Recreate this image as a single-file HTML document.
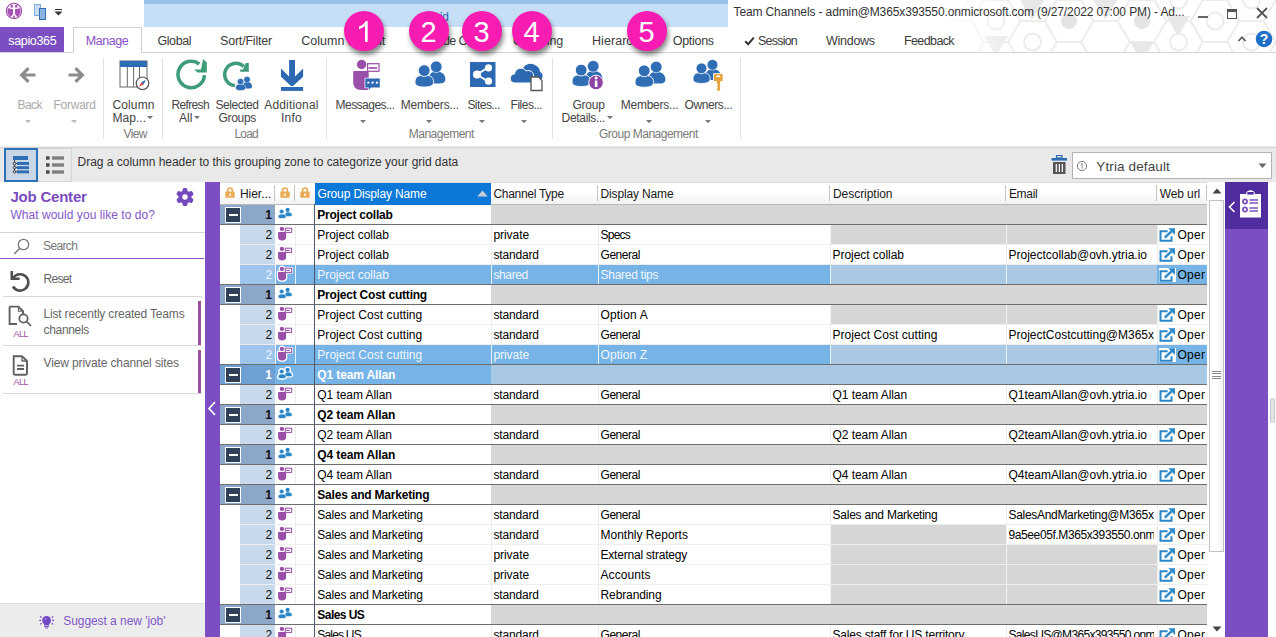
<!DOCTYPE html>
<html><head><meta charset="utf-8"><title>Team Channels</title>
<style>
html,body{margin:0;padding:0;}
body{width:1276px;height:637px;overflow:hidden;position:relative;background:#fff;font-family:"Liberation Sans", sans-serif;}
.t{position:absolute;white-space:pre;font-family:"Liberation Sans", sans-serif;}
div,svg{box-sizing:border-box;}
</style></head><body>
<svg style="position:absolute;left:900px;top:0px;" width="376" height="52" viewBox="0 0 376 52"><polygon points="-25.7,-21.0 -37.8,0.0 -62.1,0.0 -74.3,-21.0 -62.2,-42.0 -37.8,-42.0" fill="none" stroke="#ececec" stroke-width="1.6"/><polygon points="-25.7,21.0 -37.8,42.0 -62.1,42.0 -74.3,21.0 -62.2,-0.0 -37.8,-0.0" fill="none" stroke="#ececec" stroke-width="1.6"/><polygon points="-25.7,63.0 -37.8,84.0 -62.1,84.0 -74.3,63.0 -62.2,42.0 -37.8,42.0" fill="none" stroke="#ececec" stroke-width="1.6"/><polygon points="10.8,0.0 -1.3,21.0 -25.6,21.0 -37.8,0.0 -25.7,-21.0 -1.3,-21.0" fill="none" stroke="#ececec" stroke-width="1.6"/><polygon points="10.8,42.0 -1.3,63.0 -25.6,63.0 -37.8,42.0 -25.7,21.0 -1.3,21.0" fill="none" stroke="#ececec" stroke-width="1.6"/><polygon points="47.3,-21.0 35.2,0.0 10.9,0.0 -1.3,-21.0 10.8,-42.0 35.2,-42.0" fill="none" stroke="#ececec" stroke-width="1.6"/><polygon points="47.3,21.0 35.2,42.0 10.9,42.0 -1.3,21.0 10.8,-0.0 35.2,-0.0" fill="none" stroke="#ececec" stroke-width="1.6"/><polygon points="47.3,63.0 35.2,84.0 10.9,84.0 -1.3,63.0 10.8,42.0 35.2,42.0" fill="none" stroke="#ececec" stroke-width="1.6"/><polygon points="83.8,0.0 71.7,21.0 47.4,21.0 35.2,0.0 47.3,-21.0 71.7,-21.0" fill="none" stroke="#ececec" stroke-width="1.6"/><polygon points="83.8,42.0 71.7,63.0 47.4,63.0 35.2,42.0 47.3,21.0 71.7,21.0" fill="none" stroke="#ececec" stroke-width="1.6"/><polygon points="120.3,-21.0 108.2,0.0 83.9,0.0 71.7,-21.0 83.8,-42.0 108.2,-42.0" fill="none" stroke="#ececec" stroke-width="1.6"/><polygon points="120.3,21.0 108.2,42.0 83.9,42.0 71.7,21.0 83.8,-0.0 108.2,-0.0" fill="none" stroke="#ececec" stroke-width="1.6"/><polygon points="120.3,63.0 108.2,84.0 83.9,84.0 71.7,63.0 83.8,42.0 108.2,42.0" fill="none" stroke="#ececec" stroke-width="1.6"/><polygon points="156.8,0.0 144.7,21.0 120.4,21.0 108.2,0.0 120.3,-21.0 144.7,-21.0" fill="none" stroke="#ececec" stroke-width="1.6"/><polygon points="156.8,42.0 144.7,63.0 120.4,63.0 108.2,42.0 120.3,21.0 144.7,21.0" fill="none" stroke="#ececec" stroke-width="1.6"/><polygon points="193.3,-21.0 181.2,0.0 156.8,0.0 144.7,-21.0 156.8,-42.0 181.2,-42.0" fill="none" stroke="#ececec" stroke-width="1.6"/><polygon points="193.3,21.0 181.2,42.0 156.8,42.0 144.7,21.0 156.8,-0.0 181.2,-0.0" fill="none" stroke="#ececec" stroke-width="1.6"/><polygon points="193.3,63.0 181.2,84.0 156.8,84.0 144.7,63.0 156.8,42.0 181.2,42.0" fill="none" stroke="#ececec" stroke-width="1.6"/><polygon points="229.8,0.0 217.7,21.0 193.3,21.0 181.2,0.0 193.3,-21.0 217.7,-21.0" fill="none" stroke="#ececec" stroke-width="1.6"/><polygon points="229.8,42.0 217.7,63.0 193.3,63.0 181.2,42.0 193.3,21.0 217.7,21.0" fill="none" stroke="#ececec" stroke-width="1.6"/><polygon points="266.3,-21.0 254.2,0.0 229.8,0.0 217.7,-21.0 229.8,-42.0 254.2,-42.0" fill="none" stroke="#ececec" stroke-width="1.6"/><polygon points="266.3,21.0 254.2,42.0 229.8,42.0 217.7,21.0 229.8,-0.0 254.2,-0.0" fill="none" stroke="#ececec" stroke-width="1.6"/><polygon points="266.3,63.0 254.2,84.0 229.8,84.0 217.7,63.0 229.8,42.0 254.2,42.0" fill="none" stroke="#ececec" stroke-width="1.6"/><polygon points="302.8,0.0 290.6,21.0 266.4,21.0 254.2,0.0 266.3,-21.0 290.6,-21.0" fill="none" stroke="#ececec" stroke-width="1.6"/><polygon points="302.8,42.0 290.6,63.0 266.4,63.0 254.2,42.0 266.3,21.0 290.6,21.0" fill="none" stroke="#ececec" stroke-width="1.6"/><polygon points="339.3,-21.0 327.1,0.0 302.9,0.0 290.7,-21.0 302.8,-42.0 327.1,-42.0" fill="none" stroke="#ececec" stroke-width="1.6"/><polygon points="339.3,21.0 327.1,42.0 302.9,42.0 290.7,21.0 302.8,-0.0 327.1,-0.0" fill="none" stroke="#ececec" stroke-width="1.6"/><polygon points="339.3,63.0 327.1,84.0 302.9,84.0 290.7,63.0 302.8,42.0 327.1,42.0" fill="none" stroke="#ececec" stroke-width="1.6"/><polygon points="375.8,0.0 363.6,21.0 339.4,21.0 327.2,0.0 339.3,-21.0 363.6,-21.0" fill="none" stroke="#ececec" stroke-width="1.6"/><polygon points="375.8,42.0 363.6,63.0 339.4,63.0 327.2,42.0 339.3,21.0 363.6,21.0" fill="none" stroke="#ececec" stroke-width="1.6"/><polygon points="412.3,-21.0 400.1,0.0 375.9,0.0 363.7,-21.0 375.8,-42.0 400.1,-42.0" fill="none" stroke="#ececec" stroke-width="1.6"/><polygon points="412.3,21.0 400.1,42.0 375.9,42.0 363.7,21.0 375.8,-0.0 400.1,-0.0" fill="none" stroke="#ececec" stroke-width="1.6"/><polygon points="412.3,63.0 400.1,84.0 375.9,84.0 363.7,63.0 375.8,42.0 400.1,42.0" fill="none" stroke="#ececec" stroke-width="1.6"/><circle cx="-50" cy="21" r="8.5" fill="#fff" stroke="#ebebeb" stroke-width="1.8"/><circle cx="-13.5" cy="0" r="8.5" fill="#fff" stroke="#ebebeb" stroke-width="1.8"/><circle cx="23" cy="21" r="8.5" fill="#fff" stroke="#ebebeb" stroke-width="1.8"/><circle cx="59.5" cy="0" r="8.5" fill="#fff" stroke="#ebebeb" stroke-width="1.8"/><circle cx="96" cy="21" r="8.5" fill="#fff" stroke="#ebebeb" stroke-width="1.8"/><circle cx="132.5" cy="0" r="8.5" fill="#fff" stroke="#ebebeb" stroke-width="1.8"/><circle cx="132.5" cy="42" r="8.5" fill="#fff" stroke="#ebebeb" stroke-width="1.8"/><circle cx="169" cy="21" r="10.5" fill="#fff"/><circle cx="169" cy="21" r="8" fill="#e4e4e4"/><circle cx="205.5" cy="0" r="8.5" fill="#fff" stroke="#ebebeb" stroke-width="1.8"/><circle cx="242" cy="21" r="10.5" fill="#fff"/><circle cx="242" cy="21" r="8" fill="#e4e4e4"/><circle cx="278.5" cy="0" r="8.5" fill="#fff" stroke="#ebebeb" stroke-width="1.8"/><circle cx="278.5" cy="42" r="8.5" fill="#fff" stroke="#ebebeb" stroke-width="1.8"/><circle cx="315" cy="21" r="8.5" fill="#fff" stroke="#ebebeb" stroke-width="1.8"/><circle cx="351.5" cy="0" r="8.5" fill="#fff" stroke="#ebebeb" stroke-width="1.8"/><circle cx="351.5" cy="42" r="8.5" fill="#fff" stroke="#ebebeb" stroke-width="1.8"/><circle cx="388" cy="21" r="8.5" fill="#fff" stroke="#ebebeb" stroke-width="1.8"/><polygon points="193.5,0 217.5,0 205.5,20" fill="#e8e8e8"/><polygon points="266,16 290,16 278,36" fill="#e8e8e8"/><polygon points="230,42 254,42 242,62" fill="#e8e8e8"/><polygon points="120,0 144,0 132,20" fill="#e8e8e8"/><polygon points="84,36 108,36 96,56" fill="#e8e8e8"/></svg>
<div style="position:absolute;left:900px;top:0;width:120px;height:52px;background:linear-gradient(90deg,#fff 35%,rgba(255,255,255,0));"></div>
<div style="position:absolute;left:144px;top:0px;width:584px;height:27px;background:#C6DFF6;"></div>
<div style="position:absolute;left:144px;top:0px;width:584px;height:4px;background:#96C3E6;"></div>
<span class="t" style="left:426.50px;top:9.00px;font-size:12px;line-height:17px;font-weight:400;color:#2A62B0;letter-spacing:-0.043px;">Grid</span>
<svg style="position:absolute;left:5px;top:2px;" width="18" height="18" viewBox="0 0 18 18"><circle cx="9" cy="9" r="7.6" fill="#fff" stroke="#A452B0" stroke-width="1.3"/><path d="M3.2 6.2 L8 7.2 L8 12 L5.6 15 A7 7 0 0 1 3.2 6.2Z M14.8 6.2 L10 7.2 L10 12 L12.4 15 A7 7 0 0 0 14.8 6.2Z" fill="#A452B0"/><circle cx="6.8" cy="4.4" r="1.3" fill="#A452B0"/><circle cx="11.2" cy="4.4" r="1.3" fill="#A452B0"/><path d="M9 12.5 L7.6 15.8 L10.4 15.8Z" fill="#A452B0"/></svg>
<div style="position:absolute;left:34px;top:4px;width:7px;height:12px;background:#C9DCF0;border:1px solid #7FAEDD;"></div>
<div style="position:absolute;left:39px;top:8px;width:7px;height:12px;background:#8DB3DF;border:1px solid #2F70B8;"></div>
<div style="position:absolute;left:55px;top:9px;width:7px;height:1.4px;background:#333;"></div>
<svg style="position:absolute;left:54px;top:11px;" width="9" height="5" viewBox="0 0 9 5"><path d="M0.5 0.5 L8.5 0.5 L4.5 4.5Z" fill="#333"/></svg>
<span class="t" style="left:733.50px;top:4.00px;font-size:12px;line-height:17px;font-weight:400;color:#333;letter-spacing:-0.121px;">Team Channels - admin@M365x393550.onmicrosoft.com (9/27/2022 07:00 PM) - Ad...</span>
<div style="position:absolute;left:1198px;top:16px;width:10px;height:1.6px;background:#666;"></div>
<div style="position:absolute;left:1227px;top:9px;width:10px;height:10px;background:transparent;border:1.3px solid #555;border-top:3px solid #555;"></div>
<svg style="position:absolute;left:1256px;top:7px;" width="12" height="12" viewBox="0 0 12 12"><path d="M1 1 L11 11 M11 1 L1 11" stroke="#555" stroke-width="1.8" fill="none"/></svg>
<div style="position:absolute;left:0px;top:52px;width:1276px;height:1px;background:#D4D4D4;"></div>
<div style="position:absolute;left:0px;top:27px;width:64px;height:25px;background:#7B4FC1;"></div>
<span class="t" style="left:8.30px;top:32.00px;font-size:12.5px;line-height:18px;font-weight:400;color:#fff;letter-spacing:-0.344px;">sapio365</span>
<div style="position:absolute;left:72.5px;top:27px;width:69.5px;height:26px;background:#fff;border:1px solid #D0D0D0;border-bottom:none;"></div>
<span class="t" style="left:85.80px;top:32.00px;font-size:12.5px;line-height:18px;font-weight:400;color:#8A4FC8;letter-spacing:-0.431px;">Manage</span>
<span class="t" style="left:157.50px;top:32.00px;font-size:12.5px;line-height:18px;font-weight:400;color:#3b3b3b;letter-spacing:-0.440px;">Global</span>
<span class="t" style="left:220.00px;top:32.00px;font-size:12.5px;line-height:18px;font-weight:400;color:#3b3b3b;letter-spacing:-0.199px;">Sort/Filter</span>
<span class="t" style="left:301.30px;top:32.00px;font-size:12.5px;line-height:18px;font-weight:400;color:#3b3b3b;letter-spacing:-0.006px;">Column Layout</span>
<span class="t" style="left:414.50px;top:32.00px;font-size:12.5px;line-height:18px;font-weight:400;color:#3b3b3b;letter-spacing:-0.570px;">Explode Cells</span>
<span class="t" style="left:513.00px;top:32.00px;font-size:12.5px;line-height:18px;font-weight:400;color:#3b3b3b;letter-spacing:-0.180px;">Grouping</span>
<span class="t" style="left:592.00px;top:32.00px;font-size:12.5px;line-height:18px;font-weight:400;color:#3b3b3b;letter-spacing:0.056px;">Hierarchy</span>
<span class="t" style="left:672.80px;top:32.00px;font-size:12.5px;line-height:18px;font-weight:400;color:#3b3b3b;letter-spacing:-0.299px;">Options</span>
<svg style="position:absolute;left:744px;top:36px;" width="11" height="10" viewBox="0 0 11 10"><path d="M1.2 5.2 L4.2 8.2 L9.8 1.6" stroke="#333" stroke-width="2" fill="none"/></svg>
<span class="t" style="left:758.00px;top:32.00px;font-size:12.5px;line-height:18px;font-weight:400;color:#3b3b3b;letter-spacing:-0.783px;">Session</span>
<span class="t" style="left:826.00px;top:32.00px;font-size:12.5px;line-height:18px;font-weight:400;color:#3b3b3b;letter-spacing:-0.274px;">Windows</span>
<span class="t" style="left:904.00px;top:32.00px;font-size:12.5px;line-height:18px;font-weight:400;color:#3b3b3b;letter-spacing:-0.613px;">Feedback</span>
<svg style="position:absolute;left:1237px;top:35px;" width="10" height="8" viewBox="0 0 10 8"><path d="M1.5 6 L5 2.2 L8.5 6" stroke="#555" stroke-width="1.7" fill="none"/></svg>
<svg style="position:absolute;left:1255px;top:30px;" width="18" height="18" viewBox="0 0 18 18"><circle cx="9" cy="9" r="8.3" fill="#1F6FC9"/><text x="9" y="14" font-family="Liberation Sans" font-weight="700" font-size="14" fill="#fff" text-anchor="middle">?</text></svg>
<div style="position:absolute;left:0px;top:146px;width:1276px;height:1px;background:#EFEFEF;"></div>
<div style="position:absolute;left:0px;top:147px;width:1276px;height:1px;background:#D4D4D4;"></div>
<div style="position:absolute;left:103px;top:58px;width:1px;height:81px;background:#E1E1E1;"></div>
<div style="position:absolute;left:162px;top:58px;width:1px;height:81px;background:#E1E1E1;"></div>
<div style="position:absolute;left:326px;top:58px;width:1px;height:81px;background:#E1E1E1;"></div>
<div style="position:absolute;left:552px;top:58px;width:1px;height:81px;background:#E1E1E1;"></div>
<div style="position:absolute;left:740px;top:58px;width:1px;height:81px;background:#E1E1E1;"></div>
<svg style="position:absolute;left:19px;top:66px;" width="18" height="18" viewBox="0 0 18 18"><path d="M16.5 9 L3 9 M9.5 2.2 L2.7 9 L9.5 15.8" stroke="#8c8c8c" stroke-width="3.2" fill="none"/></svg>
<svg style="position:absolute;left:67px;top:66px;" width="18" height="18" viewBox="0 0 18 18"><path d="M1.5 9 L15 9 M8.5 2.2 L15.3 9 L8.5 15.8" stroke="#8c8c8c" stroke-width="3.2" fill="none"/></svg>
<span class="t" style="left:17.60px;top:97.00px;font-size:12px;line-height:17px;font-weight:400;color:#A9A9A9;letter-spacing:-0.597px;">Back</span>
<span class="t" style="left:53.50px;top:97.00px;font-size:12px;line-height:17px;font-weight:400;color:#A9A9A9;letter-spacing:-0.259px;">Forward</span>
<svg style="position:absolute;left:24.7px;top:119.5px;" width="6" height="3.4" viewBox="0 0 6 3.4"><path d="M0 0 L6 0 L3 3.2Z" fill="#bbb"/></svg>
<svg style="position:absolute;left:71px;top:119.5px;" width="6" height="3.4" viewBox="0 0 6 3.4"><path d="M0 0 L6 0 L3 3.2Z" fill="#bbb"/></svg>
<svg style="position:absolute;left:119px;top:60px;" width="32" height="32" viewBox="0 0 32 32"><rect x="1" y="1" width="27" height="26" fill="#fff" stroke="#666" stroke-width="1"/><rect x="1" y="1" width="27" height="6" fill="#2E6DB4"/><path d="M8.3 7 V27 M14.6 7 V27 M20.5 7 V27" stroke="#666" stroke-width="1"/><circle cx="23.5" cy="23.3" r="6.3" fill="#fff" stroke="#555" stroke-width="1.2"/><path d="M27 19.8 L24.6 24.4 L22.4 22.2Z" fill="#2E6DB4"/><path d="M20 26.8 L22.4 22.2 L24.6 24.4Z" fill="#D9443A"/></svg>
<span class="t" style="left:112.50px;top:97.00px;font-size:12px;line-height:17px;font-weight:400;color:#444;letter-spacing:0.123px;">Column</span>
<span class="t" style="left:112.50px;top:110.00px;font-size:12px;line-height:17px;font-weight:400;color:#444;letter-spacing:0.023px;">Map...</span>
<svg style="position:absolute;left:146.5px;top:115.5px;" width="6" height="3.4" viewBox="0 0 6 3.4"><path d="M0 0 L6 0 L3 3.2Z" fill="#777"/></svg>
<span class="t" style="left:123.60px;top:126.00px;font-size:12px;line-height:17px;font-weight:400;color:#7a7a7a;letter-spacing:-0.624px;">View</span>
<svg style="position:absolute;left:175px;top:59px;" width="34" height="32" viewBox="0 0 34 32"><path d="M29.4 16.1 A13.2 13.2 0 1 1 24.3 5.0" fill="none" stroke="#3E9C78" stroke-width="3.5"/><path d="M28.1 0.1 L31.8 3.4 L31.8 13.6 L22.5 13.6 L19.3 10.5 L26 10.5 Z" fill="#3E9C78"/></svg>
<span class="t" style="left:171.50px;top:97.00px;font-size:12px;line-height:17px;font-weight:400;color:#444;letter-spacing:-0.647px;">Refresh</span>
<span class="t" style="left:179.00px;top:110.00px;font-size:12px;line-height:17px;font-weight:400;color:#444;letter-spacing:0.085px;">All</span>
<svg style="position:absolute;left:194.3px;top:115.5px;" width="6" height="3.4" viewBox="0 0 6 3.4"><path d="M0 0 L6 0 L3 3.2Z" fill="#777"/></svg>
<svg style="position:absolute;left:222px;top:59px;" width="34" height="34" viewBox="0 0 34 34"><path d="M21.8 7.5 A11.2 11.2 0 1 0 12.9 26.6" fill="none" stroke="#3E9C78" stroke-width="3.5"/><path d="M23.8 4.1 L26.8 4.1 L26.8 12.8 L18.2 12.8 L18.2 10.4 L21 10.4 Z" fill="#3E9C78"/><g transform="translate(13.6,17.4) scale(0.54)" fill="#2F6DB5"><path d="M13 21.5 C13 13.5 16.5 10.6 21.2 10.6 C27 10.6 30.4 13.5 30.4 18.5 C30.4 21.5 27.5 22.4 24.5 22.4 L15 22.4Z"/><circle cx="21.2" cy="5.8" r="5.8" stroke="#fff" stroke-width="0.6"/><path d="M0 21.3 C0 15.6 3.5 14.2 9.2 14.2 C15 14.2 18.6 15.6 18.6 21.3 C18.6 25 14.5 26 9.2 26 C4 26 0 25 0 21.3Z" stroke="#fff" stroke-width="0.9"/><circle cx="9.2" cy="9.6" r="5.9" stroke="#fff" stroke-width="0.9"/></g></svg>
<span class="t" style="left:215.40px;top:97.00px;font-size:12px;line-height:17px;font-weight:400;color:#444;letter-spacing:-0.438px;">Selected</span>
<span class="t" style="left:218.50px;top:110.00px;font-size:12px;line-height:17px;font-weight:400;color:#444;letter-spacing:-0.310px;">Groups</span>
<svg style="position:absolute;left:280px;top:60px;" width="24" height="32" viewBox="0 0 24 32"><path d="M9.1 0 H15 V16.6 L23.1 8.5 V16.7 L13 26 H11 L1 16.7 V8.5 L9.1 16.6Z" fill="#2C69B2"/><rect x="1" y="27" width="22.1" height="3.9" fill="#2C69B2"/></svg>
<span class="t" style="left:264.30px;top:97.00px;font-size:12px;line-height:17px;font-weight:400;color:#444;letter-spacing:0.158px;">Additional</span>
<span class="t" style="left:281.00px;top:110.00px;font-size:12px;line-height:17px;font-weight:400;color:#444;letter-spacing:0.246px;">Info</span>
<span class="t" style="left:234.50px;top:126.00px;font-size:12px;line-height:17px;font-weight:400;color:#7a7a7a;letter-spacing:-0.800px;">Load</span>
<svg style="position:absolute;left:352px;top:59px;" width="30" height="33" viewBox="0 0 30 33"><circle cx="9.6" cy="5.5" r="4.7" fill="#9A4FA8"/><path d="M1.2 13 Q1.2 12 2.2 12 H15.7 Q16.7 12 16.7 13 V31 H9.5 C4 31 1.2 28 1.2 23Z" fill="#9A4FA8"/><rect x="15.6" y="4.7" width="11.4" height="7.6" fill="#fff" stroke="#9A4FA8" stroke-width="1.2"/><path d="M16.6 9 H25" stroke="#9A4FA8" stroke-width="1.7"/><path d="M12.6 18.7 H28.4 V29.2 H19.3 L16.2 32.4 V29.2 H12.6Z" fill="#fff"/><path d="M13.3 19.4 H27.8 V28.6 H19 L16.8 31 V28.6 H13.3Z" fill="#2C69B2"/><circle cx="16.3" cy="23.7" r="1.15" fill="#fff"/><circle cx="20.6" cy="23.7" r="1.15" fill="#fff"/><circle cx="24.9" cy="23.7" r="1.15" fill="#fff"/></svg>
<span class="t" style="left:335.50px;top:97.00px;font-size:12px;line-height:17px;font-weight:400;color:#444;letter-spacing:-0.518px;">Messages...</span>
<svg style="position:absolute;left:360.4px;top:119.5px;" width="6" height="3.4" viewBox="0 0 6 3.4"><path d="M0 0 L6 0 L3 3.2Z" fill="#777"/></svg>
<svg style="position:absolute;left:415px;top:61px;" width="32" height="28" viewBox="0 0 32 28"><g transform="translate(0,0) scale(1)" fill="#2F6DB5"><path d="M13 21.5 C13 13.5 16.5 10.6 21.2 10.6 C27 10.6 30.4 13.5 30.4 18.5 C30.4 21.5 27.5 22.4 24.5 22.4 L15 22.4Z"/><circle cx="21.2" cy="5.8" r="5.8" stroke="#fff" stroke-width="0.6"/><path d="M0 21.3 C0 15.6 3.5 14.2 9.2 14.2 C15 14.2 18.6 15.6 18.6 21.3 C18.6 25 14.5 26 9.2 26 C4 26 0 25 0 21.3Z" stroke="#fff" stroke-width="0.9"/><circle cx="9.2" cy="9.6" r="5.9" stroke="#fff" stroke-width="0.9"/></g></svg>
<span class="t" style="left:400.70px;top:97.00px;font-size:12px;line-height:17px;font-weight:400;color:#444;letter-spacing:-0.172px;">Members...</span>
<svg style="position:absolute;left:425.6px;top:119.5px;" width="6" height="3.4" viewBox="0 0 6 3.4"><path d="M0 0 L6 0 L3 3.2Z" fill="#777"/></svg>
<svg style="position:absolute;left:470px;top:62px;" width="26" height="26" viewBox="0 0 26 26"><rect x="0" y="0" width="25.5" height="25" fill="#2C69B2"/><path d="M7 12.5 L18 5.5 M7 12.5 L18 19.5" stroke="#fff" stroke-width="2"/><circle cx="7" cy="12.5" r="4" fill="#fff"/><circle cx="18.5" cy="5.8" r="3.6" fill="#fff"/><circle cx="18.5" cy="19.2" r="3.6" fill="#fff"/></svg>
<span class="t" style="left:467.40px;top:97.00px;font-size:12px;line-height:17px;font-weight:400;color:#444;letter-spacing:-0.548px;">Sites...</span>
<svg style="position:absolute;left:478.6px;top:119.5px;" width="6" height="3.4" viewBox="0 0 6 3.4"><path d="M0 0 L6 0 L3 3.2Z" fill="#777"/></svg>
<svg style="position:absolute;left:509px;top:60px;" width="35" height="32" viewBox="0 0 35 32"><path d="M13 16 C11 8 18 1.5 25 4.5 C29 6 31 9 31 12 C34 13 34.5 17 32 20 L14 20Z" fill="#2C69B2"/><path d="M6 23 C0 23 -0.5 14.5 5.5 14 C6 8 14 6 17 11 C21 9.5 25 12 24.5 16 C28 17 28 23 24 23Z" fill="#2C69B2" stroke="#fff" stroke-width="1"/><path d="M22 17 H29.5 L33 20.5 V30.5 H22Z" fill="#fff" stroke="#555" stroke-width="1.3"/></svg>
<span class="t" style="left:510.60px;top:97.00px;font-size:12px;line-height:17px;font-weight:400;color:#444;letter-spacing:-0.505px;">Files...</span>
<svg style="position:absolute;left:521.3px;top:119.5px;" width="6" height="3.4" viewBox="0 0 6 3.4"><path d="M0 0 L6 0 L3 3.2Z" fill="#777"/></svg>
<span class="t" style="left:408.70px;top:126.00px;font-size:12px;line-height:17px;font-weight:400;color:#7a7a7a;letter-spacing:-0.485px;">Management</span>
<svg style="position:absolute;left:572px;top:60px;" width="33" height="31" viewBox="0 0 33 31"><g transform="translate(0,0.5) scale(1)" fill="#2F6DB5"><path d="M13 21.5 C13 13.5 16.5 10.6 21.2 10.6 C27 10.6 30.4 13.5 30.4 18.5 C30.4 21.5 27.5 22.4 24.5 22.4 L15 22.4Z"/><circle cx="21.2" cy="5.8" r="5.8" stroke="#fff" stroke-width="0.6"/><path d="M0 21.3 C0 15.6 3.5 14.2 9.2 14.2 C15 14.2 18.6 15.6 18.6 21.3 C18.6 25 14.5 26 9.2 26 C4 26 0 25 0 21.3Z" stroke="#fff" stroke-width="0.9"/><circle cx="9.2" cy="9.6" r="5.9" stroke="#fff" stroke-width="0.9"/></g><circle cx="24" cy="22.5" r="7.3" fill="#8E44A5" stroke="#fff" stroke-width="1"/><rect x="22.8" y="20.5" width="2.6" height="6.5" fill="#fff"/><circle cx="24.1" cy="18" r="1.5" fill="#fff"/></svg>
<span class="t" style="left:572.40px;top:97.00px;font-size:12px;line-height:17px;font-weight:400;color:#444;letter-spacing:-0.212px;">Group</span>
<span class="t" style="left:561.60px;top:110.00px;font-size:12px;line-height:17px;font-weight:400;color:#444;letter-spacing:-0.329px;">Details...</span>
<svg style="position:absolute;left:606.6px;top:115.5px;" width="6" height="3.4" viewBox="0 0 6 3.4"><path d="M0 0 L6 0 L3 3.2Z" fill="#777"/></svg>
<svg style="position:absolute;left:634.5px;top:61px;" width="32" height="28" viewBox="0 0 32 28"><g transform="translate(0,0.2) scale(1)" fill="#2F6DB5"><path d="M13 21.5 C13 13.5 16.5 10.6 21.2 10.6 C27 10.6 30.4 13.5 30.4 18.5 C30.4 21.5 27.5 22.4 24.5 22.4 L15 22.4Z"/><circle cx="21.2" cy="5.8" r="5.8" stroke="#fff" stroke-width="0.6"/><path d="M0 21.3 C0 15.6 3.5 14.2 9.2 14.2 C15 14.2 18.6 15.6 18.6 21.3 C18.6 25 14.5 26 9.2 26 C4 26 0 25 0 21.3Z" stroke="#fff" stroke-width="0.9"/><circle cx="9.2" cy="9.6" r="5.9" stroke="#fff" stroke-width="0.9"/></g></svg>
<span class="t" style="left:620.70px;top:97.00px;font-size:12px;line-height:17px;font-weight:400;color:#444;letter-spacing:-0.232px;">Members...</span>
<svg style="position:absolute;left:645.6px;top:119.5px;" width="6" height="3.4" viewBox="0 0 6 3.4"><path d="M0 0 L6 0 L3 3.2Z" fill="#777"/></svg>
<svg style="position:absolute;left:693px;top:59px;" width="33" height="33" viewBox="0 0 33 33"><g transform="translate(0,0.5) scale(0.92)" fill="#2F6DB5"><path d="M13 21.5 C13 13.5 16.5 10.6 21.2 10.6 C27 10.6 30.4 13.5 30.4 18.5 C30.4 21.5 27.5 22.4 24.5 22.4 L15 22.4Z"/><circle cx="21.2" cy="5.8" r="5.8" stroke="#fff" stroke-width="0.6"/><path d="M0 21.3 C0 15.6 3.5 14.2 9.2 14.2 C15 14.2 18.6 15.6 18.6 21.3 C18.6 25 14.5 26 9.2 26 C4 26 0 25 0 21.3Z" stroke="#fff" stroke-width="0.9"/><circle cx="9.2" cy="9.6" r="5.9" stroke="#fff" stroke-width="0.9"/></g><path d="M20.5 14.5 H30 V22.5 H27.5 V31 L25.5 32.5 L23.5 31 V29.5 L25 28.7 L23.5 27.8 V26.6 L25 25.8 L23.5 25 V22.5 H20.5Z" fill="#E8A33B" stroke="#fff" stroke-width="0.8"/><rect x="23.2" y="16.5" width="4" height="1.6" fill="#fff"/></svg>
<span class="t" style="left:684.50px;top:97.00px;font-size:12px;line-height:17px;font-weight:400;color:#444;letter-spacing:-0.407px;">Owners...</span>
<svg style="position:absolute;left:704.8px;top:119.5px;" width="6" height="3.4" viewBox="0 0 6 3.4"><path d="M0 0 L6 0 L3 3.2Z" fill="#777"/></svg>
<span class="t" style="left:599.00px;top:126.00px;font-size:12px;line-height:17px;font-weight:400;color:#7a7a7a;letter-spacing:-0.496px;">Group Management</span>
<div style="position:absolute;left:344px;top:11px;width:40px;height:40px;border-radius:50%;background:#F91CB2;box-shadow:1.5px 4px 5px rgba(0,0,0,0.48);"></div>
<svg style="position:absolute;left:358.8px;top:21px;" width="9" height="21.2" viewBox="0 0 9 21.2"><path d="M8.7 0 V21 H6.0 V4.7 C4.6 6.1 2.4 7.4 0 8.2 V5.6 C3.2 4.3 5.8 2.2 6.9 0 Z" fill="#fff"/></svg>
<div style="position:absolute;left:409px;top:11px;width:40px;height:40px;border-radius:50%;background:#F91CB2;box-shadow:1.5px 4px 5px rgba(0,0,0,0.48);"></div>
<span class="t" style="left:420.43px;top:12.00px;font-size:29px;line-height:41px;font-weight:400;color:#fff;">2</span>
<div style="position:absolute;left:462px;top:11px;width:40px;height:40px;border-radius:50%;background:#F91CB2;box-shadow:1.5px 4px 5px rgba(0,0,0,0.48);"></div>
<span class="t" style="left:473.43px;top:12.00px;font-size:29px;line-height:41px;font-weight:400;color:#fff;">3</span>
<div style="position:absolute;left:512px;top:11px;width:40px;height:40px;border-radius:50%;background:#F91CB2;box-shadow:1.5px 4px 5px rgba(0,0,0,0.48);"></div>
<span class="t" style="left:523.43px;top:12.00px;font-size:29px;line-height:41px;font-weight:400;color:#fff;">4</span>
<div style="position:absolute;left:627px;top:11px;width:40px;height:40px;border-radius:50%;background:#F91CB2;box-shadow:1.5px 4px 5px rgba(0,0,0,0.48);"></div>
<span class="t" style="left:638.43px;top:12.00px;font-size:29px;line-height:41px;font-weight:400;color:#fff;">5</span>
<div style="position:absolute;left:0px;top:148px;width:1276px;height:34px;background:#E9E9E9;"></div>
<div style="position:absolute;left:4px;top:148px;width:34px;height:34px;background:#C8D6E5;border:2px solid #2E72B5;"></div>
<svg style="position:absolute;left:12px;top:156px;" width="20" height="18" viewBox="0 0 20 18"><rect x="1" y="0" width="15" height="4" fill="#2E6DB4"/><rect x="5" y="6" width="12" height="2.9" fill="#2E6DB4"/><rect x="5" y="10.2" width="12" height="2.9" fill="#2E6DB4"/><rect x="5" y="14.4" width="12" height="2.9" fill="#2E6DB4"/><path d="M2.5 4 V15.8 M2.5 7.4 H5 M2.5 11.6 H5 M2.5 15.8 H5" stroke="#333" stroke-width="0.9" fill="none"/><circle cx="2.5" cy="7.4" r="1.3" fill="#C8D6E5" stroke="#333" stroke-width="0.9"/><circle cx="2.5" cy="11.6" r="1.3" fill="#C8D6E5" stroke="#333" stroke-width="0.9"/><circle cx="2.5" cy="15.8" r="1.3" fill="#C8D6E5" stroke="#333" stroke-width="0.9"/></svg>
<div style="position:absolute;left:38px;top:148px;width:34px;height:34px;background:#EAEAEA;border:1px solid #D6D6D6;border-left:none;"></div>
<svg style="position:absolute;left:46px;top:156px;" width="20" height="18" viewBox="0 0 20 18"><rect x="0" y="0.3" width="3.6" height="3.4" fill="#4a4a4a"/><rect x="0" y="7.3" width="3.6" height="3.4" fill="#4a4a4a"/><rect x="0" y="14.3" width="3.6" height="3.4" fill="#4a4a4a"/><rect x="6" y="0.3" width="12" height="3.4" fill="#808080"/><rect x="6" y="7.3" width="12" height="3.4" fill="#808080"/><rect x="6" y="14.3" width="12" height="3.4" fill="#808080"/></svg>
<span class="t" style="left:77.60px;top:154.00px;font-size:12px;line-height:17px;font-weight:400;color:#333;letter-spacing:-0.024px;">Drag a column header to this grouping zone to categorize your grid data</span>
<svg style="position:absolute;left:1051px;top:155px;" width="17" height="20" viewBox="0 0 17 20"><rect x="5.5" y="0.5" width="5.5" height="2.5" fill="none" stroke="#2E6DB4" stroke-width="1.2"/><rect x="0.5" y="3" width="15.5" height="2.6" fill="#2E6DB4"/><path d="M2 7 H14.5 V19 H2Z" fill="#555"/><path d="M5.3 9 V17 M8.3 9 V17 M11.3 9 V17" stroke="#fff" stroke-width="1.2"/></svg>
<div style="position:absolute;left:1072px;top:152px;width:199.5px;height:26.5px;background:#fff;border:1px solid #B4B4B4;"></div>
<svg style="position:absolute;left:1076px;top:160px;" width="12" height="12" viewBox="0 0 12 12"><circle cx="6" cy="6" r="4.6" fill="none" stroke="#777" stroke-width="1"/><path d="M6.2 3.4 V8.6 M5 4.4 L6.2 3.4" stroke="#888" stroke-width="1" fill="none"/></svg>
<span class="t" style="left:1096.30px;top:157.00px;font-size:13.5px;line-height:19px;font-weight:400;color:#444;letter-spacing:0.127px;">Ytria default</span>
<svg style="position:absolute;left:1258px;top:163px;" width="9" height="6" viewBox="0 0 9 6"><path d="M0.5 0.5 L8.5 0.5 L4.5 5Z" fill="#666"/></svg>
<div style="position:absolute;left:0px;top:182px;width:205px;height:455px;background:#fff;"></div>
<div style="position:absolute;left:205px;top:182px;width:15px;height:455px;background:#7B4FC1;"></div>
<svg style="position:absolute;left:207px;top:401px;" width="10" height="15" viewBox="0 0 10 15"><path d="M8 1.2 L2 7.5 L8 13.8" stroke="#fff" stroke-width="1.7" fill="none"/></svg>
<span class="t" style="left:10.40px;top:186.00px;font-size:15px;line-height:21px;font-weight:700;color:#7A4CC0;letter-spacing:-0.206px;">Job Center</span>
<span class="t" style="left:10.40px;top:207.00px;font-size:12px;line-height:17px;font-weight:400;color:#8257C8;letter-spacing:0.041px;">What would you like to do?</span>
<svg style="position:absolute;left:176px;top:188px;" width="18" height="18" viewBox="0 0 18 18"><g transform="translate(9,9)" fill="#7548BE"><rect x="-2.4" y="-9" width="4.8" height="5" rx="1.6" transform="rotate(0)"/><rect x="-2.4" y="-9" width="4.8" height="5" rx="1.6" transform="rotate(60)"/><rect x="-2.4" y="-9" width="4.8" height="5" rx="1.6" transform="rotate(120)"/><rect x="-2.4" y="-9" width="4.8" height="5" rx="1.6" transform="rotate(180)"/><rect x="-2.4" y="-9" width="4.8" height="5" rx="1.6" transform="rotate(240)"/><rect x="-2.4" y="-9" width="4.8" height="5" rx="1.6" transform="rotate(300)"/><circle r="6.6"/><circle r="2.7" fill="#fff"/></g></svg>
<div style="position:absolute;left:0px;top:231.5px;width:205px;height:1px;background:#D2D2D2;"></div>
<svg style="position:absolute;left:13px;top:238px;" width="18" height="18" viewBox="0 0 18 18"><circle cx="10.5" cy="6.5" r="5.2" fill="none" stroke="#777" stroke-width="1.3"/><path d="M6.8 10.3 L1.2 16" stroke="#777" stroke-width="1.5"/></svg>
<span class="t" style="left:43.00px;top:238.00px;font-size:12px;line-height:17px;font-weight:400;color:#777;letter-spacing:-0.622px;">Search</span>
<div style="position:absolute;left:0px;top:258px;width:204px;height:1.3px;background:#8A55C8;"></div>
<svg style="position:absolute;left:9px;top:270px;" width="22" height="22" viewBox="0 0 22 22"><path d="M4.2 8 A8.2 8.2 0 1 1 4 16.5" fill="none" stroke="#505050" stroke-width="2.6"/><path d="M2.8 1 V8.8 H10.6" fill="none" stroke="#505050" stroke-width="2.6"/></svg>
<span class="t" style="left:43.50px;top:271.00px;font-size:12px;line-height:17px;font-weight:400;color:#666;letter-spacing:-0.692px;">Reset</span>
<div style="position:absolute;left:2.5px;top:296px;width:199px;height:1px;background:#D8D8D8;"></div>
<svg style="position:absolute;left:8px;top:305px;" width="25" height="22" viewBox="0 0 25 22"><path d="M1.6 1.6 H10.5 L15 6.2 V9 M1.6 1.6 V19 H9" fill="none" stroke="#606060" stroke-width="1.9"/><path d="M10.5 1.6 V6.2 H15" fill="none" stroke="#666" stroke-width="1.3"/><circle cx="15.5" cy="13.5" r="4.2" fill="none" stroke="#606060" stroke-width="1.8"/><path d="M18.6 16.6 L23 20.8" stroke="#666" stroke-width="1.8"/></svg>
<span class="t" style="left:13.60px;top:328.00px;font-size:9px;line-height:13px;font-weight:400;color:#9B4FA0;letter-spacing:-0.539px;">ALL</span>
<span class="t" style="left:43.50px;top:306.00px;font-size:12px;line-height:17px;font-weight:400;color:#666;letter-spacing:-0.180px;">List recently created Teams</span>
<span class="t" style="left:43.50px;top:322.00px;font-size:12px;line-height:17px;font-weight:400;color:#666;letter-spacing:-0.318px;">channels</span>
<div style="position:absolute;left:198.3px;top:301px;width:2.8px;height:44.5px;background:#9B4FA0;"></div>
<div style="position:absolute;left:2.5px;top:345.3px;width:199px;height:1px;background:#D8D8D8;"></div>
<svg style="position:absolute;left:12px;top:354.5px;" width="18" height="22" viewBox="0 0 18 22"><path d="M1.7 1.2 H10 L15 6 V18 C15 19.2 14.5 19.8 13.3 19.8 H3.4 C2.2 19.8 1.7 19.2 1.7 18Z" fill="none" stroke="#606060" stroke-width="1.9"/><path d="M10 1.2 V6 H15" fill="none" stroke="#666" stroke-width="1.3"/><path d="M5 10.6 H12 M5 14 H12" stroke="#606060" stroke-width="1.8"/></svg>
<span class="t" style="left:13.60px;top:376.00px;font-size:9px;line-height:13px;font-weight:400;color:#9B4FA0;letter-spacing:-0.539px;">ALL</span>
<span class="t" style="left:43.50px;top:355.00px;font-size:12px;line-height:17px;font-weight:400;color:#666;letter-spacing:-0.117px;">View private channel sites</span>
<div style="position:absolute;left:198.3px;top:350px;width:2.8px;height:43px;background:#9B4FA0;"></div>
<div style="position:absolute;left:2.5px;top:393.3px;width:199px;height:1px;background:#D8D8D8;"></div>
<div style="position:absolute;left:0px;top:603px;width:205px;height:34px;background:#ECECEC;border-top:1px solid #DEDEDE;"></div>
<svg style="position:absolute;left:38.7px;top:613.5px;" width="16" height="15" viewBox="0 0 16 15"><circle cx="7.6" cy="6.4" r="4.4" fill="#7247C2"/><path d="M5 8.5 H10.2 V11.4 H5Z" fill="#7247C2"/><rect x="5.3" y="12" width="4.6" height="1.1" fill="#7247C2"/><rect x="6.3" y="13.6" width="2.6" height="0.9" fill="#7247C2"/><circle cx="6.4" cy="5" r="1.1" fill="#9B7AD8"/><path d="M0.3 6.4 H2.2 M1 2.4 L2.6 3.5 M1 10.4 L2.6 9.3 M15 6.4 H13.1 M14.3 2.4 L12.7 3.5 M14.3 10.4 L12.7 9.3" stroke="#7247C2" stroke-width="1.1"/></svg>
<span class="t" style="left:63.20px;top:613.00px;font-size:12px;line-height:17px;font-weight:400;color:#8257C8;letter-spacing:-0.054px;">Suggest a new &#x27;job&#x27;</span>
<div style="position:absolute;left:220px;top:182px;width:987px;height:455px;background:#fff;"></div>
<div style="position:absolute;left:220px;top:182px;width:987px;height:22.5px;background:linear-gradient(#ffffff 40%,#F1F1F1);border-top:1px solid #DCDCDC;"></div>
<div style="position:absolute;left:220px;top:204px;width:987px;height:1px;background:#B9B9B9;"></div>
<div style="position:absolute;left:315px;top:182.5px;width:176px;height:22px;background:#0B78D7;"></div>
<svg style="position:absolute;left:224.5px;top:187.3px;" width="10" height="11" viewBox="0 0 10 11"><path d="M2.6 5 V3.4 C2.6 0.2 7.4 0.2 7.4 3.4 V5" fill="none" stroke="#E9AB55" stroke-width="1.6"/><rect x="0.3" y="4.6" width="9.4" height="6.2" rx="0.8" fill="#E9AB55"/><rect x="4.3" y="6.4" width="1.4" height="2.6" fill="#fff"/></svg>
<svg style="position:absolute;left:280px;top:187.3px;" width="10" height="11" viewBox="0 0 10 11"><path d="M2.6 5 V3.4 C2.6 0.2 7.4 0.2 7.4 3.4 V5" fill="none" stroke="#E9AB55" stroke-width="1.6"/><rect x="0.3" y="4.6" width="9.4" height="6.2" rx="0.8" fill="#E9AB55"/><rect x="4.3" y="6.4" width="1.4" height="2.6" fill="#fff"/></svg>
<svg style="position:absolute;left:300px;top:187.3px;" width="10" height="11" viewBox="0 0 10 11"><path d="M2.6 5 V3.4 C2.6 0.2 7.4 0.2 7.4 3.4 V5" fill="none" stroke="#E9AB55" stroke-width="1.6"/><rect x="0.3" y="4.6" width="9.4" height="6.2" rx="0.8" fill="#E9AB55"/><rect x="4.3" y="6.4" width="1.4" height="2.6" fill="#fff"/></svg>
<span class="t" style="left:240.00px;top:186.00px;font-size:12px;line-height:17px;font-weight:400;color:#1a1a1a;letter-spacing:-0.049px;">Hier...</span>
<div style="position:absolute;left:274px;top:185px;width:1px;height:16px;background:#C4C4C4;"></div>
<div style="position:absolute;left:294px;top:185px;width:1px;height:16px;background:#C4C4C4;"></div>
<div style="position:absolute;left:597px;top:185px;width:1px;height:16px;background:#C4C4C4;"></div>
<div style="position:absolute;left:829px;top:185px;width:1px;height:16px;background:#C4C4C4;"></div>
<div style="position:absolute;left:1005px;top:185px;width:1px;height:16px;background:#C4C4C4;"></div>
<div style="position:absolute;left:1156px;top:185px;width:1px;height:16px;background:#C4C4C4;"></div>
<div style="position:absolute;left:1206px;top:185px;width:1px;height:16px;background:#C4C4C4;"></div>
<span class="t" style="left:317.50px;top:186.00px;font-size:12px;line-height:17px;font-weight:400;color:#fff;letter-spacing:-0.132px;">Group Display Name</span>
<svg style="position:absolute;left:477px;top:189.5px;" width="11" height="7" viewBox="0 0 11 7"><path d="M0.3 6.5 L5.5 0.5 L10.7 6.5Z" fill="#C8CDD4"/></svg>
<span class="t" style="left:493.40px;top:186.00px;font-size:12px;line-height:17px;font-weight:400;color:#1a1a1a;letter-spacing:-0.279px;">Channel Type</span>
<span class="t" style="left:600.50px;top:186.00px;font-size:12px;line-height:17px;font-weight:400;color:#1a1a1a;letter-spacing:-0.142px;">Display Name</span>
<span class="t" style="left:833.00px;top:186.00px;font-size:12px;line-height:17px;font-weight:400;color:#1a1a1a;letter-spacing:-0.048px;">Description</span>
<span class="t" style="left:1008.90px;top:186.00px;font-size:12px;line-height:17px;font-weight:400;color:#1a1a1a;letter-spacing:-0.283px;">Email</span>
<span class="t" style="left:1159.70px;top:186.00px;font-size:12px;line-height:17px;font-weight:400;color:#1a1a1a;letter-spacing:-0.092px;">Web url</span>
<div style="position:absolute;left:220px;top:205px;width:55px;height:20px;background:#8CA7C7;"></div>
<div style="position:absolute;left:491px;top:205px;width:716px;height:20px;background:#D6D6D6;"></div>
<div style="position:absolute;left:225px;top:207px;width:16px;height:16px;background:#2F4058;border:1px solid #fff;"></div>
<div style="position:absolute;left:228.5px;top:213.5px;width:9px;height:2.6px;background:#fff;"></div>
<span class="t" style="left:265.31px;top:207.00px;font-size:12px;line-height:17px;font-weight:700;color:#111;">1</span>
<svg style="position:absolute;left:278px;top:205px;overflow:visible;" width="15" height="16" viewBox="0 0 15 16"><g fill="#2B87C8"><circle cx="9.6" cy="4.9" r="2.1"/><path d="M7 11.2 C7 8 8 7.2 9.8 7.2 C12.5 7.2 13.9 8.3 13.9 10 C13.9 11 13 11.2 12 11.2Z"/><g stroke="#fff" stroke-width="0.6"><circle cx="3.7" cy="6.6" r="2.4"/><path d="M0 12 C0 9.6 1.6 8.9 4.1 8.9 C6.6 8.9 8.2 9.6 8.2 12 C8.2 13.2 6.4 13.6 4.1 13.6 C1.8 13.6 0 13.2 0 12Z"/></g></g></svg>
<span class="t" style="left:317.30px;top:207.00px;font-size:12px;line-height:17px;font-weight:700;color:#000;letter-spacing:-0.250px;">Project collab</span>
<div style="position:absolute;left:220px;top:224px;width:987px;height:1px;background:#6E6E6E;"></div>
<div style="position:absolute;left:240px;top:225px;width:35px;height:20px;background:#C7D9EA;"></div>
<div style="position:absolute;left:830px;top:225px;width:176px;height:20px;background:#D6D6D6;"></div>
<div style="position:absolute;left:1006px;top:225px;width:151px;height:20px;background:#D6D6D6;"></div>
<div style="position:absolute;left:295px;top:225px;width:1px;height:20px;background:#ECECEC;"></div>
<div style="position:absolute;left:491px;top:225px;width:1px;height:20px;background:#ECECEC;"></div>
<div style="position:absolute;left:598px;top:225px;width:1px;height:20px;background:#ECECEC;"></div>
<div style="position:absolute;left:830px;top:225px;width:1px;height:20px;background:#F4F4F4;"></div>
<div style="position:absolute;left:1006px;top:225px;width:1px;height:20px;background:#F4F4F4;"></div>
<div style="position:absolute;left:1157px;top:225px;width:1px;height:20px;background:#ECECEC;"></div>
<div style="position:absolute;left:240px;top:244px;width:967px;height:1px;background:#EFEFEF;"></div>
<span class="t" style="left:265.61px;top:227.00px;font-size:12px;line-height:17px;font-weight:400;color:#111;">2</span>
<svg style="position:absolute;left:278px;top:225px;overflow:visible;" width="15" height="17" viewBox="0 0 15 17"><g fill="#9A4FA8"><circle cx="3.9" cy="3.9" r="2.15"/><path d="M0.1 7 H8.1 V12.6 C8.1 14.6 6.3 15.6 4.1 15.6 C1.9 15.6 0.1 14.6 0.1 12.6Z"/></g><rect x="7.3" y="3.2" width="6.3" height="4.2" fill="#fff" stroke="#9A4FA8" stroke-width="1"/><path d="M8.2 5.4 H11.8" stroke="#9A4FA8" stroke-width="1"/></svg>
<span class="t" style="left:317.30px;top:227.00px;font-size:12px;line-height:17px;font-weight:400;color:#000;letter-spacing:-0.039px;">Project collab</span>
<span class="t" style="left:493.40px;top:227.00px;font-size:12px;line-height:17px;font-weight:400;color:#000;letter-spacing:-0.047px;">private</span>
<span class="t" style="left:600.50px;top:227.00px;font-size:12px;line-height:17px;font-weight:400;color:#000;letter-spacing:-0.772px;">Specs</span>
<svg style="position:absolute;left:1159px;top:228px;" width="17" height="14" viewBox="0 0 17 14"><rect x="0" y="0" width="17" height="14" fill="#fff"/><path d="M8.6 3.2 H1.5 V12.7 H12.5 V8.2" fill="none" stroke="#2B87C8" stroke-width="2"/><path d="M5.8 9.6 L13.5 2.4" stroke="#2B87C8" stroke-width="2.3"/><path d="M9.3 0.3 H16 V7Z" fill="#2B87C8"/></svg>
<div style="position:absolute;left:1176px;top:227.00px;width:29px;height:17px;overflow:hidden;"><span class="t" style="left:1.50px;top:0;font-size:12px;line-height:17px;font-weight:400;color:#000;letter-spacing:0.285px;">Open</span></div>
<div style="position:absolute;left:240px;top:245px;width:35px;height:20px;background:#C7D9EA;"></div>
<div style="position:absolute;left:295px;top:245px;width:1px;height:20px;background:#ECECEC;"></div>
<div style="position:absolute;left:491px;top:245px;width:1px;height:20px;background:#ECECEC;"></div>
<div style="position:absolute;left:598px;top:245px;width:1px;height:20px;background:#ECECEC;"></div>
<div style="position:absolute;left:830px;top:245px;width:1px;height:20px;background:#ECECEC;"></div>
<div style="position:absolute;left:1006px;top:245px;width:1px;height:20px;background:#ECECEC;"></div>
<div style="position:absolute;left:1157px;top:245px;width:1px;height:20px;background:#ECECEC;"></div>
<div style="position:absolute;left:240px;top:264px;width:967px;height:1px;background:#ECECEC;"></div>
<span class="t" style="left:265.61px;top:247.00px;font-size:12px;line-height:17px;font-weight:400;color:#111;">2</span>
<svg style="position:absolute;left:278px;top:245px;overflow:visible;" width="15" height="17" viewBox="0 0 15 17"><g fill="#9A4FA8"><circle cx="3.9" cy="3.9" r="2.15"/><path d="M0.1 7 H8.1 V12.6 C8.1 14.6 6.3 15.6 4.1 15.6 C1.9 15.6 0.1 14.6 0.1 12.6Z"/></g><rect x="7.3" y="3.2" width="6.3" height="4.2" fill="#fff" stroke="#9A4FA8" stroke-width="1"/><path d="M8.2 5.4 H11.8" stroke="#9A4FA8" stroke-width="1"/></svg>
<span class="t" style="left:317.30px;top:247.00px;font-size:12px;line-height:17px;font-weight:400;color:#000;letter-spacing:-0.039px;">Project collab</span>
<span class="t" style="left:493.40px;top:247.00px;font-size:12px;line-height:17px;font-weight:400;color:#000;letter-spacing:-0.150px;">standard</span>
<span class="t" style="left:600.50px;top:247.00px;font-size:12px;line-height:17px;font-weight:400;color:#000;letter-spacing:-0.458px;">General</span>
<span class="t" style="left:832.50px;top:247.00px;font-size:12px;line-height:17px;font-weight:400;color:#000;letter-spacing:-0.039px;">Project collab</span>
<div style="position:absolute;left:1007px;top:247.00px;width:147px;height:17px;overflow:hidden;"><span class="t" style="left:1.50px;top:0;font-size:12px;line-height:17px;font-weight:400;color:#000;letter-spacing:-0.016px;">Projectcollab@ovh.ytria.io</span></div>
<svg style="position:absolute;left:1159px;top:248px;" width="17" height="14" viewBox="0 0 17 14"><rect x="0" y="0" width="17" height="14" fill="#fff"/><path d="M8.6 3.2 H1.5 V12.7 H12.5 V8.2" fill="none" stroke="#2B87C8" stroke-width="2"/><path d="M5.8 9.6 L13.5 2.4" stroke="#2B87C8" stroke-width="2.3"/><path d="M9.3 0.3 H16 V7Z" fill="#2B87C8"/></svg>
<div style="position:absolute;left:1176px;top:247.00px;width:29px;height:17px;overflow:hidden;"><span class="t" style="left:1.50px;top:0;font-size:12px;line-height:17px;font-weight:400;color:#000;letter-spacing:0.285px;">Open</span></div>
<div style="position:absolute;left:240px;top:265px;width:35px;height:20px;background:#9DC4EA;"></div>
<div style="position:absolute;left:275px;top:265px;width:555px;height:20px;background:#76B4E8;"></div>
<div style="position:absolute;left:830px;top:265px;width:327px;height:20px;background:#A9C8E4;"></div>
<div style="position:absolute;left:1157px;top:265px;width:50px;height:20px;background:#76B4E8;"></div>
<div style="position:absolute;left:295px;top:265px;width:1px;height:19px;background:#E8F1FA;"></div>
<div style="position:absolute;left:491px;top:265px;width:1px;height:19px;background:#E8F1FA;"></div>
<div style="position:absolute;left:598px;top:265px;width:1px;height:19px;background:#E8F1FA;"></div>
<div style="position:absolute;left:830px;top:265px;width:1px;height:19px;background:#E8F1FA;"></div>
<div style="position:absolute;left:1006px;top:265px;width:1px;height:19px;background:#E8F1FA;"></div>
<div style="position:absolute;left:275px;top:265px;width:1px;height:19px;background:#F4F8FC;"></div>
<span class="t" style="left:265.61px;top:267.00px;font-size:12px;line-height:17px;font-weight:400;color:#F2F7FC;">2</span>
<svg style="position:absolute;left:278px;top:265px;overflow:visible;" width="15" height="17" viewBox="0 0 15 17"><g fill="none" stroke="#fff" stroke-width="2.4"><circle cx="3.9" cy="3.9" r="2.15"/><path d="M0.1 7 H8.1 V12.6 C8.1 14.6 6.3 15.6 4.1 15.6 C1.9 15.6 0.1 14.6 0.1 12.6Z"/><rect x="7.3" y="3.2" width="6.3" height="4.2"/></g><g fill="#9A4FA8"><circle cx="3.9" cy="3.9" r="2.15"/><path d="M0.1 7 H8.1 V12.6 C8.1 14.6 6.3 15.6 4.1 15.6 C1.9 15.6 0.1 14.6 0.1 12.6Z"/></g><rect x="7.3" y="3.2" width="6.3" height="4.2" fill="#fff" stroke="#9A4FA8" stroke-width="1"/><path d="M8.2 5.4 H11.8" stroke="#9A4FA8" stroke-width="1"/></svg>
<span class="t" style="left:317.30px;top:267.00px;font-size:12px;line-height:17px;font-weight:400;color:#F2F7FC;letter-spacing:-0.039px;">Project collab</span>
<span class="t" style="left:493.40px;top:267.00px;font-size:12px;line-height:17px;font-weight:400;color:#F2F7FC;letter-spacing:-0.367px;">shared</span>
<span class="t" style="left:600.50px;top:267.00px;font-size:12px;line-height:17px;font-weight:400;color:#F2F7FC;letter-spacing:-0.273px;">Shared tips</span>
<svg style="position:absolute;left:1159px;top:268px;" width="17" height="14" viewBox="0 0 17 14"><rect x="0" y="0" width="17" height="14" fill="#fff"/><path d="M8.6 3.2 H1.5 V12.7 H12.5 V8.2" fill="none" stroke="#2B87C8" stroke-width="2"/><path d="M5.8 9.6 L13.5 2.4" stroke="#2B87C8" stroke-width="2.3"/><path d="M9.3 0.3 H16 V7Z" fill="#2B87C8"/></svg>
<div style="position:absolute;left:1176px;top:267.00px;width:29px;height:17px;overflow:hidden;"><span class="t" style="left:1.50px;top:0;font-size:12px;line-height:17px;font-weight:400;color:#000;letter-spacing:0.285px;">Open</span></div>
<div style="position:absolute;left:220px;top:285px;width:55px;height:20px;background:#8CA7C7;"></div>
<div style="position:absolute;left:491px;top:285px;width:716px;height:20px;background:#D6D6D6;"></div>
<div style="position:absolute;left:225px;top:287px;width:16px;height:16px;background:#2F4058;border:1px solid #fff;"></div>
<div style="position:absolute;left:228.5px;top:293.5px;width:9px;height:2.6px;background:#fff;"></div>
<span class="t" style="left:265.31px;top:287.00px;font-size:12px;line-height:17px;font-weight:700;color:#111;">1</span>
<svg style="position:absolute;left:278px;top:285px;overflow:visible;" width="15" height="16" viewBox="0 0 15 16"><g fill="#2B87C8"><circle cx="9.6" cy="4.9" r="2.1"/><path d="M7 11.2 C7 8 8 7.2 9.8 7.2 C12.5 7.2 13.9 8.3 13.9 10 C13.9 11 13 11.2 12 11.2Z"/><g stroke="#fff" stroke-width="0.6"><circle cx="3.7" cy="6.6" r="2.4"/><path d="M0 12 C0 9.6 1.6 8.9 4.1 8.9 C6.6 8.9 8.2 9.6 8.2 12 C8.2 13.2 6.4 13.6 4.1 13.6 C1.8 13.6 0 13.2 0 12Z"/></g></g></svg>
<span class="t" style="left:317.30px;top:287.00px;font-size:12px;line-height:17px;font-weight:700;color:#000;letter-spacing:-0.216px;">Project Cost cutting</span>
<div style="position:absolute;left:220px;top:304px;width:987px;height:1px;background:#6E6E6E;"></div>
<div style="position:absolute;left:240px;top:305px;width:35px;height:20px;background:#C7D9EA;"></div>
<div style="position:absolute;left:830px;top:305px;width:176px;height:20px;background:#D6D6D6;"></div>
<div style="position:absolute;left:1006px;top:305px;width:151px;height:20px;background:#D6D6D6;"></div>
<div style="position:absolute;left:295px;top:305px;width:1px;height:20px;background:#ECECEC;"></div>
<div style="position:absolute;left:491px;top:305px;width:1px;height:20px;background:#ECECEC;"></div>
<div style="position:absolute;left:598px;top:305px;width:1px;height:20px;background:#ECECEC;"></div>
<div style="position:absolute;left:830px;top:305px;width:1px;height:20px;background:#F4F4F4;"></div>
<div style="position:absolute;left:1006px;top:305px;width:1px;height:20px;background:#F4F4F4;"></div>
<div style="position:absolute;left:1157px;top:305px;width:1px;height:20px;background:#ECECEC;"></div>
<div style="position:absolute;left:240px;top:324px;width:967px;height:1px;background:#EFEFEF;"></div>
<span class="t" style="left:265.61px;top:307.00px;font-size:12px;line-height:17px;font-weight:400;color:#111;">2</span>
<svg style="position:absolute;left:278px;top:305px;overflow:visible;" width="15" height="17" viewBox="0 0 15 17"><g fill="#9A4FA8"><circle cx="3.9" cy="3.9" r="2.15"/><path d="M0.1 7 H8.1 V12.6 C8.1 14.6 6.3 15.6 4.1 15.6 C1.9 15.6 0.1 14.6 0.1 12.6Z"/></g><rect x="7.3" y="3.2" width="6.3" height="4.2" fill="#fff" stroke="#9A4FA8" stroke-width="1"/><path d="M8.2 5.4 H11.8" stroke="#9A4FA8" stroke-width="1"/></svg>
<span class="t" style="left:317.30px;top:307.00px;font-size:12px;line-height:17px;font-weight:400;color:#000;letter-spacing:0.048px;">Project Cost cutting</span>
<span class="t" style="left:493.40px;top:307.00px;font-size:12px;line-height:17px;font-weight:400;color:#000;letter-spacing:-0.150px;">standard</span>
<span class="t" style="left:600.50px;top:307.00px;font-size:12px;line-height:17px;font-weight:400;color:#000;letter-spacing:0.159px;">Option A</span>
<svg style="position:absolute;left:1159px;top:308px;" width="17" height="14" viewBox="0 0 17 14"><rect x="0" y="0" width="17" height="14" fill="#fff"/><path d="M8.6 3.2 H1.5 V12.7 H12.5 V8.2" fill="none" stroke="#2B87C8" stroke-width="2"/><path d="M5.8 9.6 L13.5 2.4" stroke="#2B87C8" stroke-width="2.3"/><path d="M9.3 0.3 H16 V7Z" fill="#2B87C8"/></svg>
<div style="position:absolute;left:1176px;top:307.00px;width:29px;height:17px;overflow:hidden;"><span class="t" style="left:1.50px;top:0;font-size:12px;line-height:17px;font-weight:400;color:#000;letter-spacing:0.285px;">Open</span></div>
<div style="position:absolute;left:240px;top:325px;width:35px;height:20px;background:#C7D9EA;"></div>
<div style="position:absolute;left:295px;top:325px;width:1px;height:20px;background:#ECECEC;"></div>
<div style="position:absolute;left:491px;top:325px;width:1px;height:20px;background:#ECECEC;"></div>
<div style="position:absolute;left:598px;top:325px;width:1px;height:20px;background:#ECECEC;"></div>
<div style="position:absolute;left:830px;top:325px;width:1px;height:20px;background:#ECECEC;"></div>
<div style="position:absolute;left:1006px;top:325px;width:1px;height:20px;background:#ECECEC;"></div>
<div style="position:absolute;left:1157px;top:325px;width:1px;height:20px;background:#ECECEC;"></div>
<div style="position:absolute;left:240px;top:344px;width:967px;height:1px;background:#ECECEC;"></div>
<span class="t" style="left:265.61px;top:327.00px;font-size:12px;line-height:17px;font-weight:400;color:#111;">2</span>
<svg style="position:absolute;left:278px;top:325px;overflow:visible;" width="15" height="17" viewBox="0 0 15 17"><g fill="#9A4FA8"><circle cx="3.9" cy="3.9" r="2.15"/><path d="M0.1 7 H8.1 V12.6 C8.1 14.6 6.3 15.6 4.1 15.6 C1.9 15.6 0.1 14.6 0.1 12.6Z"/></g><rect x="7.3" y="3.2" width="6.3" height="4.2" fill="#fff" stroke="#9A4FA8" stroke-width="1"/><path d="M8.2 5.4 H11.8" stroke="#9A4FA8" stroke-width="1"/></svg>
<span class="t" style="left:317.30px;top:327.00px;font-size:12px;line-height:17px;font-weight:400;color:#000;letter-spacing:0.048px;">Project Cost cutting</span>
<span class="t" style="left:493.40px;top:327.00px;font-size:12px;line-height:17px;font-weight:400;color:#000;letter-spacing:-0.150px;">standard</span>
<span class="t" style="left:600.50px;top:327.00px;font-size:12px;line-height:17px;font-weight:400;color:#000;letter-spacing:-0.458px;">General</span>
<span class="t" style="left:832.50px;top:327.00px;font-size:12px;line-height:17px;font-weight:400;color:#000;letter-spacing:0.048px;">Project Cost cutting</span>
<div style="position:absolute;left:1007px;top:327.00px;width:147px;height:17px;overflow:hidden;"><span class="t" style="left:1.50px;top:0;font-size:12px;line-height:17px;font-weight:400;color:#000;letter-spacing:-0.003px;">ProjectCostcutting@M365x393550.onmicrosoft.com</span></div>
<svg style="position:absolute;left:1159px;top:328px;" width="17" height="14" viewBox="0 0 17 14"><rect x="0" y="0" width="17" height="14" fill="#fff"/><path d="M8.6 3.2 H1.5 V12.7 H12.5 V8.2" fill="none" stroke="#2B87C8" stroke-width="2"/><path d="M5.8 9.6 L13.5 2.4" stroke="#2B87C8" stroke-width="2.3"/><path d="M9.3 0.3 H16 V7Z" fill="#2B87C8"/></svg>
<div style="position:absolute;left:1176px;top:327.00px;width:29px;height:17px;overflow:hidden;"><span class="t" style="left:1.50px;top:0;font-size:12px;line-height:17px;font-weight:400;color:#000;letter-spacing:0.285px;">Open</span></div>
<div style="position:absolute;left:240px;top:345px;width:35px;height:20px;background:#9DC4EA;"></div>
<div style="position:absolute;left:275px;top:345px;width:555px;height:20px;background:#76B4E8;"></div>
<div style="position:absolute;left:830px;top:345px;width:327px;height:20px;background:#A9C8E4;"></div>
<div style="position:absolute;left:1157px;top:345px;width:50px;height:20px;background:#76B4E8;"></div>
<div style="position:absolute;left:295px;top:345px;width:1px;height:19px;background:#E8F1FA;"></div>
<div style="position:absolute;left:491px;top:345px;width:1px;height:19px;background:#E8F1FA;"></div>
<div style="position:absolute;left:598px;top:345px;width:1px;height:19px;background:#E8F1FA;"></div>
<div style="position:absolute;left:830px;top:345px;width:1px;height:19px;background:#E8F1FA;"></div>
<div style="position:absolute;left:1006px;top:345px;width:1px;height:19px;background:#E8F1FA;"></div>
<div style="position:absolute;left:275px;top:345px;width:1px;height:19px;background:#F4F8FC;"></div>
<span class="t" style="left:265.61px;top:347.00px;font-size:12px;line-height:17px;font-weight:400;color:#F2F7FC;">2</span>
<svg style="position:absolute;left:278px;top:345px;overflow:visible;" width="15" height="17" viewBox="0 0 15 17"><g fill="none" stroke="#fff" stroke-width="2.4"><circle cx="3.9" cy="3.9" r="2.15"/><path d="M0.1 7 H8.1 V12.6 C8.1 14.6 6.3 15.6 4.1 15.6 C1.9 15.6 0.1 14.6 0.1 12.6Z"/><rect x="7.3" y="3.2" width="6.3" height="4.2"/></g><g fill="#9A4FA8"><circle cx="3.9" cy="3.9" r="2.15"/><path d="M0.1 7 H8.1 V12.6 C8.1 14.6 6.3 15.6 4.1 15.6 C1.9 15.6 0.1 14.6 0.1 12.6Z"/></g><rect x="7.3" y="3.2" width="6.3" height="4.2" fill="#fff" stroke="#9A4FA8" stroke-width="1"/><path d="M8.2 5.4 H11.8" stroke="#9A4FA8" stroke-width="1"/></svg>
<span class="t" style="left:317.30px;top:347.00px;font-size:12px;line-height:17px;font-weight:400;color:#F2F7FC;letter-spacing:0.048px;">Project Cost cutting</span>
<span class="t" style="left:493.40px;top:347.00px;font-size:12px;line-height:17px;font-weight:400;color:#F2F7FC;letter-spacing:-0.047px;">private</span>
<span class="t" style="left:600.50px;top:347.00px;font-size:12px;line-height:17px;font-weight:400;color:#F2F7FC;letter-spacing:0.084px;">Option Z</span>
<svg style="position:absolute;left:1159px;top:348px;" width="17" height="14" viewBox="0 0 17 14"><rect x="0" y="0" width="17" height="14" fill="#fff"/><path d="M8.6 3.2 H1.5 V12.7 H12.5 V8.2" fill="none" stroke="#2B87C8" stroke-width="2"/><path d="M5.8 9.6 L13.5 2.4" stroke="#2B87C8" stroke-width="2.3"/><path d="M9.3 0.3 H16 V7Z" fill="#2B87C8"/></svg>
<div style="position:absolute;left:1176px;top:347.00px;width:29px;height:17px;overflow:hidden;"><span class="t" style="left:1.50px;top:0;font-size:12px;line-height:17px;font-weight:400;color:#000;letter-spacing:0.285px;">Open</span></div>
<div style="position:absolute;left:220px;top:365px;width:55px;height:20px;background:#6FA0D4;"></div>
<div style="position:absolute;left:275px;top:365px;width:216px;height:20px;background:#76B4E8;"></div>
<div style="position:absolute;left:491px;top:365px;width:716px;height:20px;background:#A9C8E4;"></div>
<div style="position:absolute;left:225px;top:367px;width:16px;height:16px;background:#2F4058;border:1px solid #fff;"></div>
<div style="position:absolute;left:228.5px;top:373.5px;width:9px;height:2.6px;background:#fff;"></div>
<span class="t" style="left:265.31px;top:367.00px;font-size:12px;line-height:17px;font-weight:700;color:#fff;">1</span>
<svg style="position:absolute;left:278px;top:365px;overflow:visible;" width="15" height="16" viewBox="0 0 15 16"><g fill="none" stroke="#fff" stroke-width="2.4"><circle cx="9.6" cy="4.9" r="2.1"/><path d="M7 11.2 C7 8 8 7.2 9.8 7.2 C12.5 7.2 13.9 8.3 13.9 10 C13.9 11 13 11.2 12 11.2Z"/><circle cx="3.7" cy="6.6" r="2.4"/><path d="M0 12 C0 9.6 1.6 8.9 4.1 8.9 C6.6 8.9 8.2 9.6 8.2 12 C8.2 13.2 6.4 13.6 4.1 13.6 C1.8 13.6 0 13.2 0 12Z"/></g><g fill="#2B87C8"><circle cx="9.6" cy="4.9" r="2.1"/><path d="M7 11.2 C7 8 8 7.2 9.8 7.2 C12.5 7.2 13.9 8.3 13.9 10 C13.9 11 13 11.2 12 11.2Z"/><g stroke="#fff" stroke-width="0.6"><circle cx="3.7" cy="6.6" r="2.4"/><path d="M0 12 C0 9.6 1.6 8.9 4.1 8.9 C6.6 8.9 8.2 9.6 8.2 12 C8.2 13.2 6.4 13.6 4.1 13.6 C1.8 13.6 0 13.2 0 12Z"/></g></g></svg>
<span class="t" style="left:317.30px;top:367.00px;font-size:12px;line-height:17px;font-weight:700;color:#fff;letter-spacing:-0.123px;">Q1 team Allan</span>
<div style="position:absolute;left:220px;top:384px;width:987px;height:1px;background:#6E6E6E;"></div>
<div style="position:absolute;left:240px;top:385px;width:35px;height:20px;background:#C7D9EA;"></div>
<div style="position:absolute;left:295px;top:385px;width:1px;height:20px;background:#ECECEC;"></div>
<div style="position:absolute;left:491px;top:385px;width:1px;height:20px;background:#ECECEC;"></div>
<div style="position:absolute;left:598px;top:385px;width:1px;height:20px;background:#ECECEC;"></div>
<div style="position:absolute;left:830px;top:385px;width:1px;height:20px;background:#ECECEC;"></div>
<div style="position:absolute;left:1006px;top:385px;width:1px;height:20px;background:#ECECEC;"></div>
<div style="position:absolute;left:1157px;top:385px;width:1px;height:20px;background:#ECECEC;"></div>
<div style="position:absolute;left:240px;top:404px;width:967px;height:1px;background:#ECECEC;"></div>
<span class="t" style="left:265.61px;top:387.00px;font-size:12px;line-height:17px;font-weight:400;color:#111;">2</span>
<svg style="position:absolute;left:278px;top:385px;overflow:visible;" width="15" height="17" viewBox="0 0 15 17"><g fill="#9A4FA8"><circle cx="3.9" cy="3.9" r="2.15"/><path d="M0.1 7 H8.1 V12.6 C8.1 14.6 6.3 15.6 4.1 15.6 C1.9 15.6 0.1 14.6 0.1 12.6Z"/></g><rect x="7.3" y="3.2" width="6.3" height="4.2" fill="#fff" stroke="#9A4FA8" stroke-width="1"/><path d="M8.2 5.4 H11.8" stroke="#9A4FA8" stroke-width="1"/></svg>
<span class="t" style="left:317.30px;top:387.00px;font-size:12px;line-height:17px;font-weight:400;color:#000;letter-spacing:-0.060px;">Q1 team Allan</span>
<span class="t" style="left:493.40px;top:387.00px;font-size:12px;line-height:17px;font-weight:400;color:#000;letter-spacing:-0.150px;">standard</span>
<span class="t" style="left:600.50px;top:387.00px;font-size:12px;line-height:17px;font-weight:400;color:#000;letter-spacing:-0.458px;">General</span>
<span class="t" style="left:832.50px;top:387.00px;font-size:12px;line-height:17px;font-weight:400;color:#000;letter-spacing:-0.060px;">Q1 team Allan</span>
<div style="position:absolute;left:1007px;top:387.00px;width:147px;height:17px;overflow:hidden;"><span class="t" style="left:1.50px;top:0;font-size:12px;line-height:17px;font-weight:400;color:#000;letter-spacing:-0.045px;">Q1teamAllan@ovh.ytria.io</span></div>
<svg style="position:absolute;left:1159px;top:388px;" width="17" height="14" viewBox="0 0 17 14"><rect x="0" y="0" width="17" height="14" fill="#fff"/><path d="M8.6 3.2 H1.5 V12.7 H12.5 V8.2" fill="none" stroke="#2B87C8" stroke-width="2"/><path d="M5.8 9.6 L13.5 2.4" stroke="#2B87C8" stroke-width="2.3"/><path d="M9.3 0.3 H16 V7Z" fill="#2B87C8"/></svg>
<div style="position:absolute;left:1176px;top:387.00px;width:29px;height:17px;overflow:hidden;"><span class="t" style="left:1.50px;top:0;font-size:12px;line-height:17px;font-weight:400;color:#000;letter-spacing:0.285px;">Open</span></div>
<div style="position:absolute;left:220px;top:405px;width:55px;height:20px;background:#8CA7C7;"></div>
<div style="position:absolute;left:491px;top:405px;width:716px;height:20px;background:#D6D6D6;"></div>
<div style="position:absolute;left:225px;top:407px;width:16px;height:16px;background:#2F4058;border:1px solid #fff;"></div>
<div style="position:absolute;left:228.5px;top:413.5px;width:9px;height:2.6px;background:#fff;"></div>
<span class="t" style="left:265.31px;top:407.00px;font-size:12px;line-height:17px;font-weight:700;color:#111;">1</span>
<svg style="position:absolute;left:278px;top:405px;overflow:visible;" width="15" height="16" viewBox="0 0 15 16"><g fill="#2B87C8"><circle cx="9.6" cy="4.9" r="2.1"/><path d="M7 11.2 C7 8 8 7.2 9.8 7.2 C12.5 7.2 13.9 8.3 13.9 10 C13.9 11 13 11.2 12 11.2Z"/><g stroke="#fff" stroke-width="0.6"><circle cx="3.7" cy="6.6" r="2.4"/><path d="M0 12 C0 9.6 1.6 8.9 4.1 8.9 C6.6 8.9 8.2 9.6 8.2 12 C8.2 13.2 6.4 13.6 4.1 13.6 C1.8 13.6 0 13.2 0 12Z"/></g></g></svg>
<span class="t" style="left:317.30px;top:407.00px;font-size:12px;line-height:17px;font-weight:700;color:#000;letter-spacing:-0.123px;">Q2 team Allan</span>
<div style="position:absolute;left:220px;top:424px;width:987px;height:1px;background:#6E6E6E;"></div>
<div style="position:absolute;left:240px;top:425px;width:35px;height:20px;background:#C7D9EA;"></div>
<div style="position:absolute;left:295px;top:425px;width:1px;height:20px;background:#ECECEC;"></div>
<div style="position:absolute;left:491px;top:425px;width:1px;height:20px;background:#ECECEC;"></div>
<div style="position:absolute;left:598px;top:425px;width:1px;height:20px;background:#ECECEC;"></div>
<div style="position:absolute;left:830px;top:425px;width:1px;height:20px;background:#ECECEC;"></div>
<div style="position:absolute;left:1006px;top:425px;width:1px;height:20px;background:#ECECEC;"></div>
<div style="position:absolute;left:1157px;top:425px;width:1px;height:20px;background:#ECECEC;"></div>
<div style="position:absolute;left:240px;top:444px;width:967px;height:1px;background:#ECECEC;"></div>
<span class="t" style="left:265.61px;top:427.00px;font-size:12px;line-height:17px;font-weight:400;color:#111;">2</span>
<svg style="position:absolute;left:278px;top:425px;overflow:visible;" width="15" height="17" viewBox="0 0 15 17"><g fill="#9A4FA8"><circle cx="3.9" cy="3.9" r="2.15"/><path d="M0.1 7 H8.1 V12.6 C8.1 14.6 6.3 15.6 4.1 15.6 C1.9 15.6 0.1 14.6 0.1 12.6Z"/></g><rect x="7.3" y="3.2" width="6.3" height="4.2" fill="#fff" stroke="#9A4FA8" stroke-width="1"/><path d="M8.2 5.4 H11.8" stroke="#9A4FA8" stroke-width="1"/></svg>
<span class="t" style="left:317.30px;top:427.00px;font-size:12px;line-height:17px;font-weight:400;color:#000;letter-spacing:-0.060px;">Q2 team Allan</span>
<span class="t" style="left:493.40px;top:427.00px;font-size:12px;line-height:17px;font-weight:400;color:#000;letter-spacing:-0.150px;">standard</span>
<span class="t" style="left:600.50px;top:427.00px;font-size:12px;line-height:17px;font-weight:400;color:#000;letter-spacing:-0.458px;">General</span>
<span class="t" style="left:832.50px;top:427.00px;font-size:12px;line-height:17px;font-weight:400;color:#000;letter-spacing:-0.060px;">Q2 team Allan</span>
<div style="position:absolute;left:1007px;top:427.00px;width:147px;height:17px;overflow:hidden;"><span class="t" style="left:1.50px;top:0;font-size:12px;line-height:17px;font-weight:400;color:#000;letter-spacing:-0.045px;">Q2teamAllan@ovh.ytria.io</span></div>
<svg style="position:absolute;left:1159px;top:428px;" width="17" height="14" viewBox="0 0 17 14"><rect x="0" y="0" width="17" height="14" fill="#fff"/><path d="M8.6 3.2 H1.5 V12.7 H12.5 V8.2" fill="none" stroke="#2B87C8" stroke-width="2"/><path d="M5.8 9.6 L13.5 2.4" stroke="#2B87C8" stroke-width="2.3"/><path d="M9.3 0.3 H16 V7Z" fill="#2B87C8"/></svg>
<div style="position:absolute;left:1176px;top:427.00px;width:29px;height:17px;overflow:hidden;"><span class="t" style="left:1.50px;top:0;font-size:12px;line-height:17px;font-weight:400;color:#000;letter-spacing:0.285px;">Open</span></div>
<div style="position:absolute;left:220px;top:445px;width:55px;height:20px;background:#8CA7C7;"></div>
<div style="position:absolute;left:491px;top:445px;width:716px;height:20px;background:#D6D6D6;"></div>
<div style="position:absolute;left:225px;top:447px;width:16px;height:16px;background:#2F4058;border:1px solid #fff;"></div>
<div style="position:absolute;left:228.5px;top:453.5px;width:9px;height:2.6px;background:#fff;"></div>
<span class="t" style="left:265.31px;top:447.00px;font-size:12px;line-height:17px;font-weight:700;color:#111;">1</span>
<svg style="position:absolute;left:278px;top:445px;overflow:visible;" width="15" height="16" viewBox="0 0 15 16"><g fill="#2B87C8"><circle cx="9.6" cy="4.9" r="2.1"/><path d="M7 11.2 C7 8 8 7.2 9.8 7.2 C12.5 7.2 13.9 8.3 13.9 10 C13.9 11 13 11.2 12 11.2Z"/><g stroke="#fff" stroke-width="0.6"><circle cx="3.7" cy="6.6" r="2.4"/><path d="M0 12 C0 9.6 1.6 8.9 4.1 8.9 C6.6 8.9 8.2 9.6 8.2 12 C8.2 13.2 6.4 13.6 4.1 13.6 C1.8 13.6 0 13.2 0 12Z"/></g></g></svg>
<span class="t" style="left:317.30px;top:447.00px;font-size:12px;line-height:17px;font-weight:700;color:#000;letter-spacing:-0.123px;">Q4 team Allan</span>
<div style="position:absolute;left:220px;top:464px;width:987px;height:1px;background:#6E6E6E;"></div>
<div style="position:absolute;left:240px;top:465px;width:35px;height:20px;background:#C7D9EA;"></div>
<div style="position:absolute;left:295px;top:465px;width:1px;height:20px;background:#ECECEC;"></div>
<div style="position:absolute;left:491px;top:465px;width:1px;height:20px;background:#ECECEC;"></div>
<div style="position:absolute;left:598px;top:465px;width:1px;height:20px;background:#ECECEC;"></div>
<div style="position:absolute;left:830px;top:465px;width:1px;height:20px;background:#ECECEC;"></div>
<div style="position:absolute;left:1006px;top:465px;width:1px;height:20px;background:#ECECEC;"></div>
<div style="position:absolute;left:1157px;top:465px;width:1px;height:20px;background:#ECECEC;"></div>
<div style="position:absolute;left:240px;top:484px;width:967px;height:1px;background:#ECECEC;"></div>
<span class="t" style="left:265.61px;top:467.00px;font-size:12px;line-height:17px;font-weight:400;color:#111;">2</span>
<svg style="position:absolute;left:278px;top:465px;overflow:visible;" width="15" height="17" viewBox="0 0 15 17"><g fill="#9A4FA8"><circle cx="3.9" cy="3.9" r="2.15"/><path d="M0.1 7 H8.1 V12.6 C8.1 14.6 6.3 15.6 4.1 15.6 C1.9 15.6 0.1 14.6 0.1 12.6Z"/></g><rect x="7.3" y="3.2" width="6.3" height="4.2" fill="#fff" stroke="#9A4FA8" stroke-width="1"/><path d="M8.2 5.4 H11.8" stroke="#9A4FA8" stroke-width="1"/></svg>
<span class="t" style="left:317.30px;top:467.00px;font-size:12px;line-height:17px;font-weight:400;color:#000;letter-spacing:-0.060px;">Q4 team Allan</span>
<span class="t" style="left:493.40px;top:467.00px;font-size:12px;line-height:17px;font-weight:400;color:#000;letter-spacing:-0.150px;">standard</span>
<span class="t" style="left:600.50px;top:467.00px;font-size:12px;line-height:17px;font-weight:400;color:#000;letter-spacing:-0.458px;">General</span>
<span class="t" style="left:832.50px;top:467.00px;font-size:12px;line-height:17px;font-weight:400;color:#000;letter-spacing:-0.060px;">Q4 team Allan</span>
<div style="position:absolute;left:1007px;top:467.00px;width:147px;height:17px;overflow:hidden;"><span class="t" style="left:1.50px;top:0;font-size:12px;line-height:17px;font-weight:400;color:#000;letter-spacing:-0.045px;">Q4teamAllan@ovh.ytria.io</span></div>
<svg style="position:absolute;left:1159px;top:468px;" width="17" height="14" viewBox="0 0 17 14"><rect x="0" y="0" width="17" height="14" fill="#fff"/><path d="M8.6 3.2 H1.5 V12.7 H12.5 V8.2" fill="none" stroke="#2B87C8" stroke-width="2"/><path d="M5.8 9.6 L13.5 2.4" stroke="#2B87C8" stroke-width="2.3"/><path d="M9.3 0.3 H16 V7Z" fill="#2B87C8"/></svg>
<div style="position:absolute;left:1176px;top:467.00px;width:29px;height:17px;overflow:hidden;"><span class="t" style="left:1.50px;top:0;font-size:12px;line-height:17px;font-weight:400;color:#000;letter-spacing:0.285px;">Open</span></div>
<div style="position:absolute;left:220px;top:485px;width:55px;height:20px;background:#8CA7C7;"></div>
<div style="position:absolute;left:491px;top:485px;width:716px;height:20px;background:#D6D6D6;"></div>
<div style="position:absolute;left:225px;top:487px;width:16px;height:16px;background:#2F4058;border:1px solid #fff;"></div>
<div style="position:absolute;left:228.5px;top:493.5px;width:9px;height:2.6px;background:#fff;"></div>
<span class="t" style="left:265.31px;top:487.00px;font-size:12px;line-height:17px;font-weight:700;color:#111;">1</span>
<svg style="position:absolute;left:278px;top:485px;overflow:visible;" width="15" height="16" viewBox="0 0 15 16"><g fill="#2B87C8"><circle cx="9.6" cy="4.9" r="2.1"/><path d="M7 11.2 C7 8 8 7.2 9.8 7.2 C12.5 7.2 13.9 8.3 13.9 10 C13.9 11 13 11.2 12 11.2Z"/><g stroke="#fff" stroke-width="0.6"><circle cx="3.7" cy="6.6" r="2.4"/><path d="M0 12 C0 9.6 1.6 8.9 4.1 8.9 C6.6 8.9 8.2 9.6 8.2 12 C8.2 13.2 6.4 13.6 4.1 13.6 C1.8 13.6 0 13.2 0 12Z"/></g></g></svg>
<span class="t" style="left:317.30px;top:487.00px;font-size:12px;line-height:17px;font-weight:700;color:#000;letter-spacing:-0.213px;">Sales and Marketing</span>
<div style="position:absolute;left:220px;top:504px;width:987px;height:1px;background:#6E6E6E;"></div>
<div style="position:absolute;left:240px;top:505px;width:35px;height:20px;background:#C7D9EA;"></div>
<div style="position:absolute;left:295px;top:505px;width:1px;height:20px;background:#ECECEC;"></div>
<div style="position:absolute;left:491px;top:505px;width:1px;height:20px;background:#ECECEC;"></div>
<div style="position:absolute;left:598px;top:505px;width:1px;height:20px;background:#ECECEC;"></div>
<div style="position:absolute;left:830px;top:505px;width:1px;height:20px;background:#ECECEC;"></div>
<div style="position:absolute;left:1006px;top:505px;width:1px;height:20px;background:#ECECEC;"></div>
<div style="position:absolute;left:1157px;top:505px;width:1px;height:20px;background:#ECECEC;"></div>
<div style="position:absolute;left:240px;top:524px;width:967px;height:1px;background:#ECECEC;"></div>
<span class="t" style="left:265.61px;top:507.00px;font-size:12px;line-height:17px;font-weight:400;color:#111;">2</span>
<svg style="position:absolute;left:278px;top:505px;overflow:visible;" width="15" height="17" viewBox="0 0 15 17"><g fill="#9A4FA8"><circle cx="3.9" cy="3.9" r="2.15"/><path d="M0.1 7 H8.1 V12.6 C8.1 14.6 6.3 15.6 4.1 15.6 C1.9 15.6 0.1 14.6 0.1 12.6Z"/></g><rect x="7.3" y="3.2" width="6.3" height="4.2" fill="#fff" stroke="#9A4FA8" stroke-width="1"/><path d="M8.2 5.4 H11.8" stroke="#9A4FA8" stroke-width="1"/></svg>
<span class="t" style="left:317.30px;top:507.00px;font-size:12px;line-height:17px;font-weight:400;color:#000;letter-spacing:-0.216px;">Sales and Marketing</span>
<span class="t" style="left:493.40px;top:507.00px;font-size:12px;line-height:17px;font-weight:400;color:#000;letter-spacing:-0.150px;">standard</span>
<span class="t" style="left:600.50px;top:507.00px;font-size:12px;line-height:17px;font-weight:400;color:#000;letter-spacing:-0.458px;">General</span>
<span class="t" style="left:832.50px;top:507.00px;font-size:12px;line-height:17px;font-weight:400;color:#000;letter-spacing:-0.232px;">Sales and Marketing</span>
<div style="position:absolute;left:1007px;top:507.00px;width:147px;height:17px;overflow:hidden;"><span class="t" style="left:1.50px;top:0;font-size:12px;line-height:17px;font-weight:400;color:#000;letter-spacing:-0.308px;">SalesAndMarketing@M365x393550.onmicrosoft.com</span></div>
<svg style="position:absolute;left:1159px;top:508px;" width="17" height="14" viewBox="0 0 17 14"><rect x="0" y="0" width="17" height="14" fill="#fff"/><path d="M8.6 3.2 H1.5 V12.7 H12.5 V8.2" fill="none" stroke="#2B87C8" stroke-width="2"/><path d="M5.8 9.6 L13.5 2.4" stroke="#2B87C8" stroke-width="2.3"/><path d="M9.3 0.3 H16 V7Z" fill="#2B87C8"/></svg>
<div style="position:absolute;left:1176px;top:507.00px;width:29px;height:17px;overflow:hidden;"><span class="t" style="left:1.50px;top:0;font-size:12px;line-height:17px;font-weight:400;color:#000;letter-spacing:0.285px;">Open</span></div>
<div style="position:absolute;left:240px;top:525px;width:35px;height:20px;background:#C7D9EA;"></div>
<div style="position:absolute;left:830px;top:525px;width:176px;height:20px;background:#D6D6D6;"></div>
<div style="position:absolute;left:295px;top:525px;width:1px;height:20px;background:#ECECEC;"></div>
<div style="position:absolute;left:491px;top:525px;width:1px;height:20px;background:#ECECEC;"></div>
<div style="position:absolute;left:598px;top:525px;width:1px;height:20px;background:#ECECEC;"></div>
<div style="position:absolute;left:830px;top:525px;width:1px;height:20px;background:#F4F4F4;"></div>
<div style="position:absolute;left:1006px;top:525px;width:1px;height:20px;background:#F4F4F4;"></div>
<div style="position:absolute;left:1157px;top:525px;width:1px;height:20px;background:#ECECEC;"></div>
<div style="position:absolute;left:240px;top:544px;width:967px;height:1px;background:#EFEFEF;"></div>
<span class="t" style="left:265.61px;top:527.00px;font-size:12px;line-height:17px;font-weight:400;color:#111;">2</span>
<svg style="position:absolute;left:278px;top:525px;overflow:visible;" width="15" height="17" viewBox="0 0 15 17"><g fill="#9A4FA8"><circle cx="3.9" cy="3.9" r="2.15"/><path d="M0.1 7 H8.1 V12.6 C8.1 14.6 6.3 15.6 4.1 15.6 C1.9 15.6 0.1 14.6 0.1 12.6Z"/></g><rect x="7.3" y="3.2" width="6.3" height="4.2" fill="#fff" stroke="#9A4FA8" stroke-width="1"/><path d="M8.2 5.4 H11.8" stroke="#9A4FA8" stroke-width="1"/></svg>
<span class="t" style="left:317.30px;top:527.00px;font-size:12px;line-height:17px;font-weight:400;color:#000;letter-spacing:-0.216px;">Sales and Marketing</span>
<span class="t" style="left:493.40px;top:527.00px;font-size:12px;line-height:17px;font-weight:400;color:#000;letter-spacing:-0.150px;">standard</span>
<span class="t" style="left:600.50px;top:527.00px;font-size:12px;line-height:17px;font-weight:400;color:#000;letter-spacing:0.002px;">Monthly Reports</span>
<div style="position:absolute;left:1007px;top:527.00px;width:147px;height:17px;overflow:hidden;"><span class="t" style="left:1.50px;top:0;font-size:12px;line-height:17px;font-weight:400;color:#000;letter-spacing:-0.397px;">9a5ee05f.M365x393550.onmicrosoft.com</span></div>
<svg style="position:absolute;left:1159px;top:528px;" width="17" height="14" viewBox="0 0 17 14"><rect x="0" y="0" width="17" height="14" fill="#fff"/><path d="M8.6 3.2 H1.5 V12.7 H12.5 V8.2" fill="none" stroke="#2B87C8" stroke-width="2"/><path d="M5.8 9.6 L13.5 2.4" stroke="#2B87C8" stroke-width="2.3"/><path d="M9.3 0.3 H16 V7Z" fill="#2B87C8"/></svg>
<div style="position:absolute;left:1176px;top:527.00px;width:29px;height:17px;overflow:hidden;"><span class="t" style="left:1.50px;top:0;font-size:12px;line-height:17px;font-weight:400;color:#000;letter-spacing:0.285px;">Open</span></div>
<div style="position:absolute;left:240px;top:545px;width:35px;height:20px;background:#C7D9EA;"></div>
<div style="position:absolute;left:830px;top:545px;width:176px;height:20px;background:#D6D6D6;"></div>
<div style="position:absolute;left:1006px;top:545px;width:151px;height:20px;background:#D6D6D6;"></div>
<div style="position:absolute;left:295px;top:545px;width:1px;height:20px;background:#ECECEC;"></div>
<div style="position:absolute;left:491px;top:545px;width:1px;height:20px;background:#ECECEC;"></div>
<div style="position:absolute;left:598px;top:545px;width:1px;height:20px;background:#ECECEC;"></div>
<div style="position:absolute;left:830px;top:545px;width:1px;height:20px;background:#F4F4F4;"></div>
<div style="position:absolute;left:1006px;top:545px;width:1px;height:20px;background:#F4F4F4;"></div>
<div style="position:absolute;left:1157px;top:545px;width:1px;height:20px;background:#ECECEC;"></div>
<div style="position:absolute;left:240px;top:564px;width:967px;height:1px;background:#EFEFEF;"></div>
<span class="t" style="left:265.61px;top:547.00px;font-size:12px;line-height:17px;font-weight:400;color:#111;">2</span>
<svg style="position:absolute;left:278px;top:545px;overflow:visible;" width="15" height="17" viewBox="0 0 15 17"><g fill="#9A4FA8"><circle cx="3.9" cy="3.9" r="2.15"/><path d="M0.1 7 H8.1 V12.6 C8.1 14.6 6.3 15.6 4.1 15.6 C1.9 15.6 0.1 14.6 0.1 12.6Z"/></g><rect x="7.3" y="3.2" width="6.3" height="4.2" fill="#fff" stroke="#9A4FA8" stroke-width="1"/><path d="M8.2 5.4 H11.8" stroke="#9A4FA8" stroke-width="1"/></svg>
<span class="t" style="left:317.30px;top:547.00px;font-size:12px;line-height:17px;font-weight:400;color:#000;letter-spacing:-0.216px;">Sales and Marketing</span>
<span class="t" style="left:493.40px;top:547.00px;font-size:12px;line-height:17px;font-weight:400;color:#000;letter-spacing:-0.047px;">private</span>
<span class="t" style="left:600.50px;top:547.00px;font-size:12px;line-height:17px;font-weight:400;color:#000;letter-spacing:-0.209px;">External strategy</span>
<svg style="position:absolute;left:1159px;top:548px;" width="17" height="14" viewBox="0 0 17 14"><rect x="0" y="0" width="17" height="14" fill="#fff"/><path d="M8.6 3.2 H1.5 V12.7 H12.5 V8.2" fill="none" stroke="#2B87C8" stroke-width="2"/><path d="M5.8 9.6 L13.5 2.4" stroke="#2B87C8" stroke-width="2.3"/><path d="M9.3 0.3 H16 V7Z" fill="#2B87C8"/></svg>
<div style="position:absolute;left:1176px;top:547.00px;width:29px;height:17px;overflow:hidden;"><span class="t" style="left:1.50px;top:0;font-size:12px;line-height:17px;font-weight:400;color:#000;letter-spacing:0.285px;">Open</span></div>
<div style="position:absolute;left:240px;top:565px;width:35px;height:20px;background:#C7D9EA;"></div>
<div style="position:absolute;left:830px;top:565px;width:176px;height:20px;background:#D6D6D6;"></div>
<div style="position:absolute;left:1006px;top:565px;width:151px;height:20px;background:#D6D6D6;"></div>
<div style="position:absolute;left:295px;top:565px;width:1px;height:20px;background:#ECECEC;"></div>
<div style="position:absolute;left:491px;top:565px;width:1px;height:20px;background:#ECECEC;"></div>
<div style="position:absolute;left:598px;top:565px;width:1px;height:20px;background:#ECECEC;"></div>
<div style="position:absolute;left:830px;top:565px;width:1px;height:20px;background:#F4F4F4;"></div>
<div style="position:absolute;left:1006px;top:565px;width:1px;height:20px;background:#F4F4F4;"></div>
<div style="position:absolute;left:1157px;top:565px;width:1px;height:20px;background:#ECECEC;"></div>
<div style="position:absolute;left:240px;top:584px;width:967px;height:1px;background:#EFEFEF;"></div>
<span class="t" style="left:265.61px;top:567.00px;font-size:12px;line-height:17px;font-weight:400;color:#111;">2</span>
<svg style="position:absolute;left:278px;top:565px;overflow:visible;" width="15" height="17" viewBox="0 0 15 17"><g fill="#9A4FA8"><circle cx="3.9" cy="3.9" r="2.15"/><path d="M0.1 7 H8.1 V12.6 C8.1 14.6 6.3 15.6 4.1 15.6 C1.9 15.6 0.1 14.6 0.1 12.6Z"/></g><rect x="7.3" y="3.2" width="6.3" height="4.2" fill="#fff" stroke="#9A4FA8" stroke-width="1"/><path d="M8.2 5.4 H11.8" stroke="#9A4FA8" stroke-width="1"/></svg>
<span class="t" style="left:317.30px;top:567.00px;font-size:12px;line-height:17px;font-weight:400;color:#000;letter-spacing:-0.216px;">Sales and Marketing</span>
<span class="t" style="left:493.40px;top:567.00px;font-size:12px;line-height:17px;font-weight:400;color:#000;letter-spacing:-0.047px;">private</span>
<span class="t" style="left:600.50px;top:567.00px;font-size:12px;line-height:17px;font-weight:400;color:#000;letter-spacing:0.080px;">Accounts</span>
<svg style="position:absolute;left:1159px;top:568px;" width="17" height="14" viewBox="0 0 17 14"><rect x="0" y="0" width="17" height="14" fill="#fff"/><path d="M8.6 3.2 H1.5 V12.7 H12.5 V8.2" fill="none" stroke="#2B87C8" stroke-width="2"/><path d="M5.8 9.6 L13.5 2.4" stroke="#2B87C8" stroke-width="2.3"/><path d="M9.3 0.3 H16 V7Z" fill="#2B87C8"/></svg>
<div style="position:absolute;left:1176px;top:567.00px;width:29px;height:17px;overflow:hidden;"><span class="t" style="left:1.50px;top:0;font-size:12px;line-height:17px;font-weight:400;color:#000;letter-spacing:0.285px;">Open</span></div>
<div style="position:absolute;left:240px;top:585px;width:35px;height:20px;background:#C7D9EA;"></div>
<div style="position:absolute;left:830px;top:585px;width:176px;height:20px;background:#D6D6D6;"></div>
<div style="position:absolute;left:1006px;top:585px;width:151px;height:20px;background:#D6D6D6;"></div>
<div style="position:absolute;left:295px;top:585px;width:1px;height:20px;background:#ECECEC;"></div>
<div style="position:absolute;left:491px;top:585px;width:1px;height:20px;background:#ECECEC;"></div>
<div style="position:absolute;left:598px;top:585px;width:1px;height:20px;background:#ECECEC;"></div>
<div style="position:absolute;left:830px;top:585px;width:1px;height:20px;background:#F4F4F4;"></div>
<div style="position:absolute;left:1006px;top:585px;width:1px;height:20px;background:#F4F4F4;"></div>
<div style="position:absolute;left:1157px;top:585px;width:1px;height:20px;background:#ECECEC;"></div>
<div style="position:absolute;left:240px;top:604px;width:967px;height:1px;background:#EFEFEF;"></div>
<span class="t" style="left:265.61px;top:587.00px;font-size:12px;line-height:17px;font-weight:400;color:#111;">2</span>
<svg style="position:absolute;left:278px;top:585px;overflow:visible;" width="15" height="17" viewBox="0 0 15 17"><g fill="#9A4FA8"><circle cx="3.9" cy="3.9" r="2.15"/><path d="M0.1 7 H8.1 V12.6 C8.1 14.6 6.3 15.6 4.1 15.6 C1.9 15.6 0.1 14.6 0.1 12.6Z"/></g><rect x="7.3" y="3.2" width="6.3" height="4.2" fill="#fff" stroke="#9A4FA8" stroke-width="1"/><path d="M8.2 5.4 H11.8" stroke="#9A4FA8" stroke-width="1"/></svg>
<span class="t" style="left:317.30px;top:587.00px;font-size:12px;line-height:17px;font-weight:400;color:#000;letter-spacing:-0.216px;">Sales and Marketing</span>
<span class="t" style="left:493.40px;top:587.00px;font-size:12px;line-height:17px;font-weight:400;color:#000;letter-spacing:-0.150px;">standard</span>
<span class="t" style="left:600.50px;top:587.00px;font-size:12px;line-height:17px;font-weight:400;color:#000;letter-spacing:-0.105px;">Rebranding</span>
<svg style="position:absolute;left:1159px;top:588px;" width="17" height="14" viewBox="0 0 17 14"><rect x="0" y="0" width="17" height="14" fill="#fff"/><path d="M8.6 3.2 H1.5 V12.7 H12.5 V8.2" fill="none" stroke="#2B87C8" stroke-width="2"/><path d="M5.8 9.6 L13.5 2.4" stroke="#2B87C8" stroke-width="2.3"/><path d="M9.3 0.3 H16 V7Z" fill="#2B87C8"/></svg>
<div style="position:absolute;left:1176px;top:587.00px;width:29px;height:17px;overflow:hidden;"><span class="t" style="left:1.50px;top:0;font-size:12px;line-height:17px;font-weight:400;color:#000;letter-spacing:0.285px;">Open</span></div>
<div style="position:absolute;left:220px;top:605px;width:55px;height:20px;background:#8CA7C7;"></div>
<div style="position:absolute;left:491px;top:605px;width:716px;height:20px;background:#D6D6D6;"></div>
<div style="position:absolute;left:225px;top:607px;width:16px;height:16px;background:#2F4058;border:1px solid #fff;"></div>
<div style="position:absolute;left:228.5px;top:613.5px;width:9px;height:2.6px;background:#fff;"></div>
<span class="t" style="left:265.31px;top:607.00px;font-size:12px;line-height:17px;font-weight:700;color:#111;">1</span>
<svg style="position:absolute;left:278px;top:605px;overflow:visible;" width="15" height="16" viewBox="0 0 15 16"><g fill="#2B87C8"><circle cx="9.6" cy="4.9" r="2.1"/><path d="M7 11.2 C7 8 8 7.2 9.8 7.2 C12.5 7.2 13.9 8.3 13.9 10 C13.9 11 13 11.2 12 11.2Z"/><g stroke="#fff" stroke-width="0.6"><circle cx="3.7" cy="6.6" r="2.4"/><path d="M0 12 C0 9.6 1.6 8.9 4.1 8.9 C6.6 8.9 8.2 9.6 8.2 12 C8.2 13.2 6.4 13.6 4.1 13.6 C1.8 13.6 0 13.2 0 12Z"/></g></g></svg>
<span class="t" style="left:317.30px;top:607.00px;font-size:12px;line-height:17px;font-weight:700;color:#000;letter-spacing:-0.547px;">Sales US</span>
<div style="position:absolute;left:220px;top:624px;width:987px;height:1px;background:#6E6E6E;"></div>
<div style="position:absolute;left:240px;top:625px;width:35px;height:20px;background:#C7D9EA;"></div>
<div style="position:absolute;left:295px;top:625px;width:1px;height:20px;background:#ECECEC;"></div>
<div style="position:absolute;left:491px;top:625px;width:1px;height:20px;background:#ECECEC;"></div>
<div style="position:absolute;left:598px;top:625px;width:1px;height:20px;background:#ECECEC;"></div>
<div style="position:absolute;left:830px;top:625px;width:1px;height:20px;background:#ECECEC;"></div>
<div style="position:absolute;left:1006px;top:625px;width:1px;height:20px;background:#ECECEC;"></div>
<div style="position:absolute;left:1157px;top:625px;width:1px;height:20px;background:#ECECEC;"></div>
<div style="position:absolute;left:240px;top:644px;width:967px;height:1px;background:#ECECEC;"></div>
<span class="t" style="left:265.61px;top:627.00px;font-size:12px;line-height:17px;font-weight:400;color:#111;">2</span>
<svg style="position:absolute;left:278px;top:625px;overflow:visible;" width="15" height="17" viewBox="0 0 15 17"><g fill="#9A4FA8"><circle cx="3.9" cy="3.9" r="2.15"/><path d="M0.1 7 H8.1 V12.6 C8.1 14.6 6.3 15.6 4.1 15.6 C1.9 15.6 0.1 14.6 0.1 12.6Z"/></g><rect x="7.3" y="3.2" width="6.3" height="4.2" fill="#fff" stroke="#9A4FA8" stroke-width="1"/><path d="M8.2 5.4 H11.8" stroke="#9A4FA8" stroke-width="1"/></svg>
<span class="t" style="left:317.30px;top:627.00px;font-size:12px;line-height:17px;font-weight:400;color:#000;letter-spacing:-0.800px;">Sales US</span>
<span class="t" style="left:493.40px;top:627.00px;font-size:12px;line-height:17px;font-weight:400;color:#000;letter-spacing:-0.150px;">standard</span>
<span class="t" style="left:600.50px;top:627.00px;font-size:12px;line-height:17px;font-weight:400;color:#000;letter-spacing:-0.458px;">General</span>
<span class="t" style="left:832.50px;top:627.00px;font-size:12px;line-height:17px;font-weight:400;color:#000;letter-spacing:-0.195px;">Sales staff for US territory</span>
<div style="position:absolute;left:1007px;top:627.00px;width:147px;height:17px;overflow:hidden;"><span class="t" style="left:1.50px;top:0;font-size:12px;line-height:17px;font-weight:400;color:#000;letter-spacing:-0.665px;">SalesUS@M365x393550.onmicrosoft.com</span></div>
<svg style="position:absolute;left:1159px;top:628px;" width="17" height="14" viewBox="0 0 17 14"><rect x="0" y="0" width="17" height="14" fill="#fff"/><path d="M8.6 3.2 H1.5 V12.7 H12.5 V8.2" fill="none" stroke="#2B87C8" stroke-width="2"/><path d="M5.8 9.6 L13.5 2.4" stroke="#2B87C8" stroke-width="2.3"/><path d="M9.3 0.3 H16 V7Z" fill="#2B87C8"/></svg>
<div style="position:absolute;left:1176px;top:627.00px;width:29px;height:17px;overflow:hidden;"><span class="t" style="left:1.50px;top:0;font-size:12px;line-height:17px;font-weight:400;color:#000;letter-spacing:0.285px;">Open</span></div>
<div style="position:absolute;left:220px;top:284px;width:987px;height:1px;background:#6E6E6E;"></div>
<div style="position:absolute;left:220px;top:364px;width:987px;height:1px;background:#6E6E6E;"></div>
<div style="position:absolute;left:220px;top:404px;width:987px;height:1px;background:#6E6E6E;"></div>
<div style="position:absolute;left:220px;top:444px;width:987px;height:1px;background:#6E6E6E;"></div>
<div style="position:absolute;left:220px;top:484px;width:987px;height:1px;background:#6E6E6E;"></div>
<div style="position:absolute;left:220px;top:604px;width:987px;height:1px;background:#6E6E6E;"></div>
<div style="position:absolute;left:314px;top:204px;width:1px;height:433px;background:#4E586A;"></div>
<div style="position:absolute;left:1207px;top:182px;width:18px;height:455px;background:#fff;"></div>
<svg style="position:absolute;left:1211.5px;top:187.5px;" width="10" height="6" viewBox="0 0 10 6"><path d="M0.5 5.5 L5 0.5 L9.5 5.5Z" fill="#444"/></svg>
<svg style="position:absolute;left:1211.5px;top:626px;" width="10" height="6" viewBox="0 0 10 6"><path d="M0.5 0.5 L5 5.5 L9.5 0.5Z" fill="#444"/></svg>
<div style="position:absolute;left:1209px;top:199.5px;width:15px;height:352px;background:linear-gradient(90deg,#fff 55%,#F3F3F6);border:1px solid #C2C2C2;"></div>
<div style="position:absolute;left:1212px;top:371px;width:9px;height:1px;background:#8a8a8a;"></div>
<div style="position:absolute;left:1212px;top:373.3px;width:9px;height:1px;background:#8a8a8a;"></div>
<div style="position:absolute;left:1212px;top:375.6px;width:9px;height:1px;background:#8a8a8a;"></div>
<div style="position:absolute;left:1212px;top:377.9px;width:9px;height:1px;background:#8a8a8a;"></div>
<div style="position:absolute;left:1225px;top:182px;width:43px;height:455px;background:#7B4FC1;"></div>
<div style="position:absolute;left:1225px;top:182px;width:43px;height:47px;background:#4F2D9E;"></div>
<svg style="position:absolute;left:1228px;top:201px;" width="8" height="12" viewBox="0 0 8 12"><path d="M6.5 1 L1.5 6 L6.5 11" stroke="#fff" stroke-width="1.6" fill="none"/></svg>
<svg style="position:absolute;left:1239px;top:189px;" width="24" height="30" viewBox="0 0 24 30"><path d="M1 5 H7 C7 0 16 0 16 5 H22 V28.5 H1Z" fill="#fff"/><rect x="8.3" y="3" width="6.4" height="2.6" fill="#4F2D9E"/><circle cx="6" cy="12.5" r="2.1" fill="none" stroke="#7B4FC1" stroke-width="1.7"/><circle cx="6" cy="20.5" r="2.1" fill="none" stroke="#7B4FC1" stroke-width="1.7"/><path d="M10.5 11 H19 M10.5 14 H19 M10.5 19 H19 M10.5 22 H19" stroke="#7B4FC1" stroke-width="1.5"/></svg>
<div style="position:absolute;left:1268px;top:182px;width:8px;height:455px;background:#fff;"></div>
<div style="position:absolute;left:1269.5px;top:398px;width:5px;height:24.5px;background:#E4E4E4;border:1px solid #C6C6C6;border-radius:2.5px;"></div>
</body></html>
